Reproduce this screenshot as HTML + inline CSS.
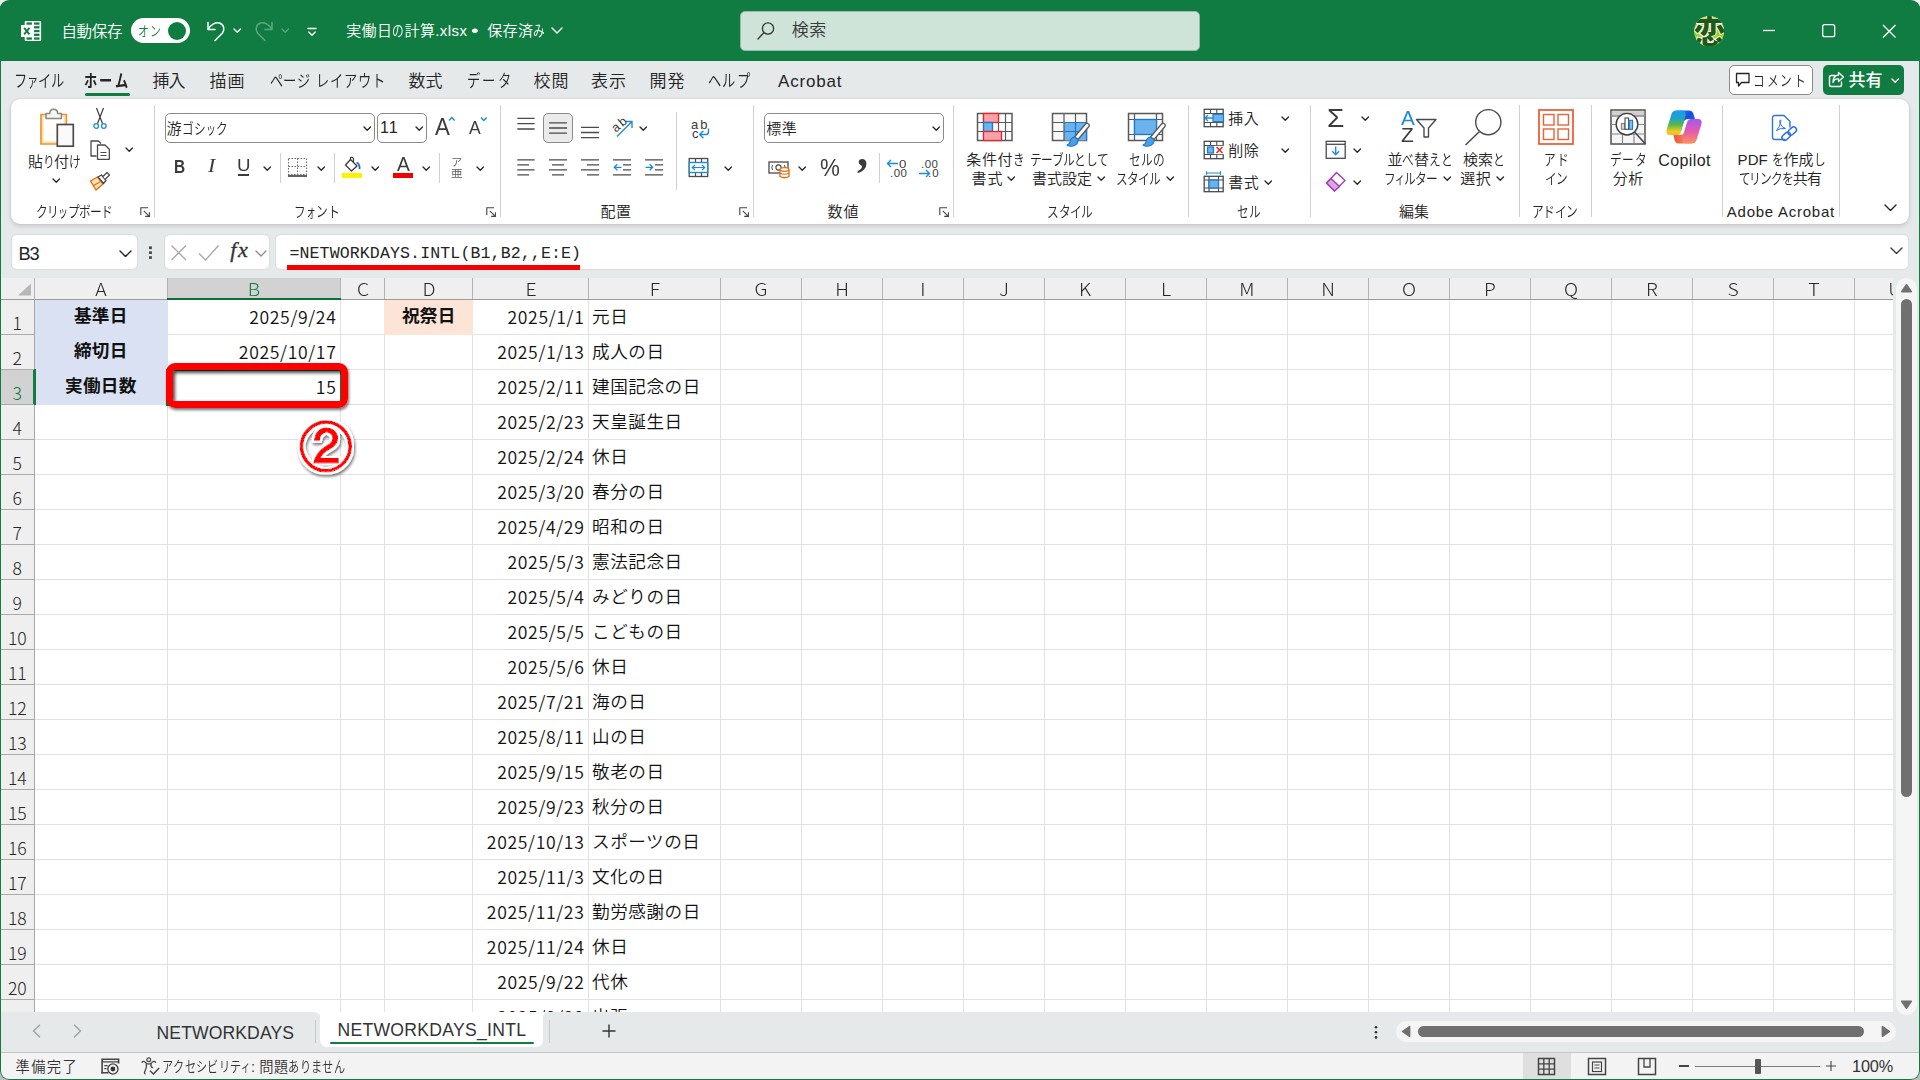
<!DOCTYPE html>
<html lang="ja"><head><meta charset="utf-8"><title>実働日の計算.xlsx - Excel</title>
<style>
html,body{margin:0;padding:0;background:linear-gradient(#EFEFEF 0 50%,#BDBDBD 50% 100%);}
body{width:1920px;height:1080px;position:relative;overflow:hidden;font-family:'Liberation Sans','Noto Sans CJK JP',sans-serif;}
#win{position:absolute;left:0;top:0;width:1920px;height:1080px;background:#E6E9EA;border-radius:9px;overflow:hidden;}
#frame{position:absolute;left:0;top:0;width:1918px;height:1078px;border:1px solid #107C41;border-right-width:1.5px;border-bottom-width:1.5px;border-radius:9px;border-top-color:transparent;z-index:50;box-sizing:content-box;width:1917.5px;height:1077.5px;pointer-events:none}
.b{position:absolute;box-sizing:border-box;}
.t{position:absolute;white-space:nowrap;}
.k,.ks{display:inline-block;font-style:normal;transform-origin:0 50%;}
.k{transform:scaleX(.78);width:calc(.78em + var(--ls));letter-spacing:0}
.ks{transform:scaleX(.66);width:calc(.66em + var(--ls));letter-spacing:0}
.sep{position:absolute;width:1px;background:#D1D1D1;}
</style></head>
<body><div id="win">
<div class="b" style="left:0px;top:0px;width:1920px;height:60.5px;background:#107C41"></div>
<svg class="b" style="left:20px;top:20px;" width="22" height="22" viewBox="0 0 22 22"><rect x="4.7" y="1" width="16.4" height="20.1" rx="1" fill="#fff"/><rect x="6.5" y="2.4" width="5.4" height="2.3" fill="#107C41"/><rect x="6.5" y="6.15" width="5.4" height="2.3" fill="#107C41"/><rect x="6.5" y="9.9" width="5.4" height="2.3" fill="#107C41"/><rect x="6.5" y="13.65" width="5.4" height="2.3" fill="#107C41"/><rect x="6.5" y="17.4" width="5.4" height="2.3" fill="#107C41"/><rect x="14.1" y="2.4" width="5.4" height="2.3" fill="#107C41"/><rect x="14.1" y="6.15" width="5.4" height="2.3" fill="#107C41"/><rect x="14.1" y="9.9" width="5.4" height="2.3" fill="#107C41"/><rect x="14.1" y="13.65" width="5.4" height="2.3" fill="#107C41"/><rect x="14.1" y="17.4" width="5.4" height="2.3" fill="#107C41"/><rect x="1" y="5" width="11.6" height="12" rx=".6" fill="#fff"/><path d="M4.2 7.8L9.4 14.4M9.4 7.8L4.2 14.4" stroke="#107C41" stroke-width="1.9" fill="none"/></svg>
<span id="t1" class="t " style="left:61.40px;top:20.60px;font-size:15.5px;line-height:22px;color:#fff;font-weight:350;font-family:'Liberation Sans','Noto Sans CJK JP',sans-serif;--ls:-0.333px;letter-spacing:-0.333px;">自動保存</span>
<div class="b" style="left:131px;top:18px;width:59px;height:25px;background:#fff;border-radius:13px"></div>
<span id="t2" class="t " style="left:138.00px;top:20.50px;font-size:14px;line-height:20px;color:#107C41;font-weight:350;font-family:'Liberation Sans','Noto Sans CJK JP',sans-serif;--ls:1.000px;letter-spacing:1.000px;"><i class="k">オ</i><i class="k">ン</i></span>
<div class="b" style="left:168px;top:21.5px;width:18px;height:18px;background:#107C41;border-radius:9px"></div>
<svg class="b" style="left:205px;top:19px;" width="22" height="24" viewBox="0 0 22 24"><path d="M3 3.5 V10.5 H10" fill="none" stroke="#fff" stroke-width="1.5" stroke-linecap="round" stroke-linejoin="round"/><path d="M3.5 10 C6 5.5 10.5 2.8 14.5 4 C19 5.5 20 10.5 17.5 14 L10 21.5" fill="none" stroke="#fff" stroke-width="1.5" stroke-linecap="round"/></svg>
<svg class="b" style="left:233.25px;top:27.9px;" width="8.5" height="5.2" viewBox="0 0 8.5 5.2"><path d="M1 1 L4.25 4.2 L7.5 1" fill="none" stroke="#fff" stroke-width="1.3" stroke-linecap="round" stroke-linejoin="round"/></svg>
<svg class="b" style="left:253px;top:19px;" width="22" height="24" viewBox="0 0 22 24"><path d="M19 3.5 V10.5 H12" fill="none" stroke="#5FA583" stroke-width="1.5" stroke-linecap="round" stroke-linejoin="round"/><path d="M18.5 10 C16 5.5 11.5 2.8 7.5 4 C3 5.5 2 10.5 4.5 14 L12 21.5" fill="none" stroke="#5FA583" stroke-width="1.5" stroke-linecap="round"/></svg>
<svg class="b" style="left:281.25px;top:27.9px;" width="8.5" height="5.2" viewBox="0 0 8.5 5.2"><path d="M1 1 L4.25 4.2 L7.5 1" fill="none" stroke="#5FA583" stroke-width="1.3" stroke-linecap="round" stroke-linejoin="round"/></svg>
<svg class="b" style="left:306px;top:26px;" width="12" height="12" viewBox="0 0 12 12"><path d="M2 2.5H10" stroke="#fff" stroke-width="1.3" stroke-linecap="round"/><path d="M2.8 6 L6 9.2 L9.2 6" fill="none" stroke="#fff" stroke-width="1.3" stroke-linecap="round" stroke-linejoin="round"/></svg>
<span id="t3" class="t " style="left:346.20px;top:20.30px;font-size:15px;line-height:21px;color:#fff;font-weight:350;font-family:'Liberation Sans','Noto Sans CJK JP',sans-serif;--ls:0.400px;letter-spacing:0.400px;">実働日<i class="k">の</i>計算.xlsx</span>
<span id="t4" class="t " style="left:471.00px;top:18.80px;font-size:17px;line-height:24px;color:#fff;font-weight:350;font-family:'Liberation Sans','Noto Sans CJK JP',sans-serif;--ls:0.000px;letter-spacing:0.000px;transform:scaleX(1.300);transform-origin:0 50%;">•</span>
<span id="t5" class="t " style="left:487.20px;top:20.30px;font-size:15px;line-height:21px;color:#fff;font-weight:350;font-family:'Liberation Sans','Noto Sans CJK JP',sans-serif;--ls:0.400px;letter-spacing:0.400px;">保存済<i class="k">み</i></span>
<svg class="b" style="left:551.0px;top:27.0px;" width="12" height="7" viewBox="0 0 12 7"><path d="M1 1 L6.0 6 L11 1" fill="none" stroke="#fff" stroke-width="1.4" stroke-linecap="round" stroke-linejoin="round"/></svg>
<div class="b" style="left:740px;top:11px;width:460px;height:40px;background:#CFE4D9;border:1px solid #9DB8AA;border-radius:5px"></div>
<svg class="b" style="left:756px;top:21px;" width="20" height="20" viewBox="0 0 20 20"><circle cx="12" cy="7.5" r="5.6" fill="none" stroke="#3A3A3A" stroke-width="1.4"/><path d="M8 11.5 L2 18" stroke="#3A3A3A" stroke-width="1.4" stroke-linecap="round"/></svg>
<span id="t6" class="t " style="left:791.70px;top:18.50px;font-size:17px;line-height:24px;color:#3A3A3A;font-weight:350;font-family:'Liberation Sans','Noto Sans CJK JP',sans-serif;--ls:0.600px;letter-spacing:0.600px;">検索</span>
<svg class="b" style="left:1693.8px;top:15.9px" width="30.4" height="30.4" viewBox="0 0 30.4 30.4"><clipPath id="avc"><circle cx="15.2" cy="15.2" r="15.2"/></clipPath><g clip-path="url(#avc)"><rect width="31" height="31" fill="#97D11F"/><text x="15.4" y="28.3" text-anchor="middle" font-family="'Liberation Sans','Noto Sans CJK JP',sans-serif" font-weight="900" font-size="33" fill="#1F5A14" stroke="#fff" stroke-width="1.8" stroke-linejoin="round" paint-order="stroke">恋</text></g></svg>
<svg class="b" style="left:1762px;top:24px;" width="14" height="14" viewBox="0 0 14 14"><path d="M1 6.5H13" stroke="#fff" stroke-width="1.3"/></svg>
<svg class="b" style="left:1821px;top:23px;" width="16" height="16" viewBox="0 0 16 16"><rect x="1.7" y="1.7" width="12" height="12" rx="2" fill="none" stroke="#fff" stroke-width="1.3"/></svg>
<svg class="b" style="left:1881px;top:23px;" width="16" height="16" viewBox="0 0 16 16"><path d="M2 2L14.5 14.5M14.5 2L2 14.5" stroke="#fff" stroke-width="1.3"/></svg>
<span id="t7" class="t " style="left:14.00px;top:70.10px;font-size:17px;line-height:24px;color:#242424;font-weight:350;font-family:'Liberation Sans','Noto Sans CJK JP',sans-serif;--ls:-0.333px;letter-spacing:-0.333px;"><i class="k">フ</i><i class="ks">ァ</i><i class="k">イ</i><i class="k">ル</i></span>
<span id="t8" class="t " style="left:84.00px;top:70.10px;font-size:17px;line-height:24px;color:#242424;font-weight:700;font-family:'Liberation Sans','Noto Sans CJK JP',sans-serif;--ls:2.000px;letter-spacing:2.000px;"><i class="k">ホ</i><i class="k">ー</i><i class="k">ム</i></span>
<span id="t9" class="t " style="left:152.50px;top:70.10px;font-size:17px;line-height:24px;color:#242424;font-weight:350;font-family:'Liberation Sans','Noto Sans CJK JP',sans-serif;--ls:-1.000px;letter-spacing:-1.000px;">挿入</span>
<span id="t10" class="t " style="left:209.50px;top:70.10px;font-size:17px;line-height:24px;color:#242424;font-weight:350;font-family:'Liberation Sans','Noto Sans CJK JP',sans-serif;--ls:1.000px;letter-spacing:1.000px;">描画</span>
<span id="t11" class="t " style="left:269.50px;top:70.10px;font-size:17px;line-height:24px;color:#242424;font-weight:350;font-family:'Liberation Sans','Noto Sans CJK JP',sans-serif;--ls:0.625px;letter-spacing:0.625px;"><i class="k">ペ</i><i class="k">ー</i><i class="k">ジ</i> <i class="k">レ</i><i class="k">イ</i><i class="k">ア</i><i class="k">ウ</i><i class="k">ト</i></span>
<span id="t12" class="t " style="left:408.50px;top:70.10px;font-size:17px;line-height:24px;color:#242424;font-weight:350;font-family:'Liberation Sans','Noto Sans CJK JP',sans-serif;--ls:0.000px;letter-spacing:0.000px;">数式</span>
<span id="t13" class="t " style="left:467.00px;top:70.10px;font-size:17px;line-height:24px;color:#242424;font-weight:350;font-family:'Liberation Sans','Noto Sans CJK JP',sans-serif;--ls:2.000px;letter-spacing:2.000px;"><i class="k">デ</i><i class="k">ー</i><i class="k">タ</i></span>
<span id="t14" class="t " style="left:533.50px;top:70.10px;font-size:17px;line-height:24px;color:#242424;font-weight:350;font-family:'Liberation Sans','Noto Sans CJK JP',sans-serif;--ls:1.000px;letter-spacing:1.000px;">校閲</span>
<span id="t15" class="t " style="left:591.00px;top:70.10px;font-size:17px;line-height:24px;color:#242424;font-weight:350;font-family:'Liberation Sans','Noto Sans CJK JP',sans-serif;--ls:1.000px;letter-spacing:1.000px;">表示</span>
<span id="t16" class="t " style="left:649.50px;top:70.10px;font-size:17px;line-height:24px;color:#242424;font-weight:350;font-family:'Liberation Sans','Noto Sans CJK JP',sans-serif;--ls:1.000px;letter-spacing:1.000px;">開発</span>
<span id="t17" class="t " style="left:707.50px;top:70.10px;font-size:17px;line-height:24px;color:#242424;font-weight:350;font-family:'Liberation Sans','Noto Sans CJK JP',sans-serif;--ls:1.500px;letter-spacing:1.500px;"><i class="k">ヘ</i><i class="k">ル</i><i class="k">プ</i></span>
<span id="t18" class="t " style="left:778.00px;top:70.10px;font-size:17px;line-height:24px;color:#242424;font-weight:350;font-family:'Liberation Sans','Noto Sans CJK JP',sans-serif;--ls:0.833px;letter-spacing:0.833px;">Acrobat</span>
<div class="b" style="left:85px;top:92.5px;width:45px;height:3.5px;background:#107C41;border-radius:2px"></div>
<div class="b" style="left:1729px;top:65px;width:84px;height:30px;background:#fff;border:1px solid #8A8A8A;border-radius:5px"></div>
<svg class="b" style="left:1735px;top:72px;" width="16" height="16" viewBox="0 0 16 16"><path d="M1.5 1.5H14V10.5H6.5L3.5 14V10.5H1.5Z" fill="none" stroke="#242424" stroke-width="1.3" stroke-linejoin="round"/></svg>
<span id="t19" class="t " style="left:1753.00px;top:70.00px;font-size:15px;line-height:21px;color:#242424;font-weight:350;font-family:'Liberation Sans','Noto Sans CJK JP',sans-serif;--ls:2.000px;letter-spacing:2.000px;"><i class="k">コ</i><i class="k">メ</i><i class="k">ン</i><i class="k">ト</i></span>
<div class="b" style="left:1823px;top:65px;width:81px;height:30px;background:#107C41;border-radius:5px"></div>
<svg class="b" style="left:1828px;top:71px;" width="18" height="18" viewBox="0 0 18 18"><path d="M7 4.5H3.2Q1.5 4.5 1.5 6.2V14Q1.5 15.5 3.2 15.5H11.8Q13.5 15.5 13.5 14V11" fill="none" stroke="#fff" stroke-width="1.4" stroke-linecap="round"/><path d="M10.5 1.5 L15.5 6 L10.5 10.5 V8 Q6.5 7.5 5 11.5 Q5 4.5 10.5 4Z" fill="none" stroke="#fff" stroke-width="1.3" stroke-linejoin="round"/></svg>
<span id="t20" class="t " style="left:1848.60px;top:69.00px;font-size:17px;line-height:24px;color:#fff;font-weight:500;font-family:'Liberation Sans','Noto Sans CJK JP',sans-serif;--ls:-0.200px;letter-spacing:-0.200px;">共有</span>
<svg class="b" style="left:1890.75px;top:78.4px;" width="8.5" height="5.2" viewBox="0 0 8.5 5.2"><path d="M1 1 L4.25 4.2 L7.5 1" fill="none" stroke="#fff" stroke-width="1.4" stroke-linecap="round" stroke-linejoin="round"/></svg>
<div class="b" style="left:11px;top:99px;width:1898px;height:125px;background:#fff;border-radius:9px;box-shadow:0 2px 5px rgba(0,0,0,.14),0 0 1.5px rgba(0,0,0,.12)"></div>
<svg class="b" style="left:39px;top:108px;" width="36" height="40" viewBox="0 0 36 40"><path d="M2 6.5H27.3V36H2Z" fill="#FFFDF8" stroke="#E8912D" stroke-width="1.7"/><path d="M3.7 8.2H25.6V34.3H3.7Z" fill="none" stroke="#FBDDA8" stroke-width="1.6"/>
<path d="M7 5.5H10.8C10.8 2.2 12.7 1.2 14.7 1.2S18.6 2.2 18.6 5.5H22.4V10.4H7Z" fill="#F5F5F5" stroke="#8A8886" stroke-width="1.5" stroke-linejoin="round"/>
<rect x="18.3" y="16.5" width="16" height="21.7" fill="#FAFAFA" stroke="#4A4A4A" stroke-width="1.7"/></svg>
<span id="t21" class="t " style="left:28.00px;top:150.50px;font-size:15px;line-height:21px;color:#242424;font-weight:350;font-family:'Liberation Sans','Noto Sans CJK JP',sans-serif;--ls:-0.333px;letter-spacing:-0.333px;">貼<i class="k">り</i>付<i class="k">け</i></span>
<svg class="b" style="left:51.95px;top:177.70000000000002px;" width="8.5" height="5.2" viewBox="0 0 8.5 5.2"><path d="M1 1 L4.25 4.2 L7.5 1" fill="none" stroke="#242424" stroke-width="1.3" stroke-linecap="round" stroke-linejoin="round"/></svg>
<svg class="b" style="left:92px;top:107px;" width="16" height="23" viewBox="0 0 16 23"><path d="M4.5 1 L10.5 16.5 M11.5 1 L5.5 16.5" stroke="#3B3B3B" stroke-width="1.2" fill="none"/>
<circle cx="4.2" cy="19" r="2.3" fill="none" stroke="#1E8BD8" stroke-width="1.3"/><circle cx="11.8" cy="19" r="2.3" fill="none" stroke="#1E8BD8" stroke-width="1.3"/></svg>
<svg class="b" style="left:89px;top:139px;" width="22" height="22" viewBox="0 0 22 22"><path d="M7.5 17H2V2H9.5L12 4.5" fill="none" stroke="#4A4A4A" stroke-width="1.3" stroke-linejoin="round"/>
<path d="M8.5 6H16L20.3 10.3V20.3H8.5Z" fill="#fff" stroke="#4A4A4A" stroke-width="1.3" stroke-linejoin="round"/>
<path d="M11.5 13.5H17.5M11.5 16.5H17.5" stroke="#4A4A4A" stroke-width="1.1"/></svg>
<svg class="b" style="left:125.44999999999999px;top:147.4px;" width="8.5" height="5.2" viewBox="0 0 8.5 5.2"><path d="M1 1 L4.25 4.2 L7.5 1" fill="none" stroke="#242424" stroke-width="1.3" stroke-linecap="round" stroke-linejoin="round"/></svg>
<svg class="b" style="left:89px;top:171px;" width="22" height="21" viewBox="0 0 22 21"><path d="M1.5 10 L8.5 6 L14 13 L7 19Z" fill="#FCE2B8" stroke="#E36C0A" stroke-width="1.4" stroke-linejoin="round"/>
<path d="M4.5 14.5 L11 11" stroke="#E36C0A" stroke-width="1.2"/>
<path d="M9 6 L12.5 4 L17 9.5 L14.5 12.5Z" fill="#fff" stroke="#4A4A4A" stroke-width="1.3" stroke-linejoin="round"/>
<path d="M14 5.5 L18 1.5 L20.5 4 L16.5 8" fill="#fff" stroke="#4A4A4A" stroke-width="1.3" stroke-linejoin="round"/></svg>
<span id="t22" class="t " style="left:36.00px;top:201.00px;font-size:15px;line-height:21px;color:#242424;font-weight:350;font-family:'Liberation Sans','Noto Sans CJK JP',sans-serif;--ls:-0.500px;letter-spacing:-0.500px;"><i class="k">ク</i><i class="k">リ</i><i class="ks">ッ</i><i class="k">プ</i><i class="k">ボ</i><i class="k">ー</i><i class="k">ド</i></span>
<svg class="b" style="left:140px;top:207px;" width="10" height="10" viewBox="0 0 10 10"><path d="M0.8 8V0.8H8" fill="none" stroke="#444" stroke-width="1.1"/><path d="M3.8 3.8L9.3 9.3M9.4 5.2V9.4H5.2" fill="none" stroke="#444" stroke-width="1.1"/></svg>
<div class="sep" style="left:154px;top:105px;height:112px"></div>
<div class="b" style="left:165px;top:113px;width:210px;height:30px;border:1px solid #8A8A8A;border-radius:5px;background:#fff"></div>
<span id="t23" class="t " style="left:166.50px;top:117.50px;font-size:15px;line-height:21px;color:#242424;font-weight:350;font-family:'Liberation Sans','Noto Sans CJK JP',sans-serif;--ls:0.250px;letter-spacing:0.250px;">游<i class="k">ゴ</i><i class="k">シ</i><i class="ks">ッ</i><i class="k">ク</i></span>
<svg class="b" style="left:363.15px;top:125.70000000000002px;" width="8.5" height="5.2" viewBox="0 0 8.5 5.2"><path d="M1 1 L4.25 4.2 L7.5 1" fill="none" stroke="#242424" stroke-width="1.3" stroke-linecap="round" stroke-linejoin="round"/></svg>
<div class="b" style="left:377px;top:113px;width:50px;height:30px;border:1px solid #8A8A8A;border-radius:5px;background:#fff"></div>
<span id="t24" class="t " style="left:380.00px;top:117.00px;font-size:16px;line-height:22px;color:#242424;font-weight:350;font-family:'Liberation Sans','Noto Sans CJK JP',sans-serif;--ls:1.000px;letter-spacing:1.000px;">11</span>
<svg class="b" style="left:414.75px;top:125.70000000000002px;" width="8.5" height="5.2" viewBox="0 0 8.5 5.2"><path d="M1 1 L4.25 4.2 L7.5 1" fill="none" stroke="#242424" stroke-width="1.3" stroke-linecap="round" stroke-linejoin="round"/></svg>
<span id="t25" class="t " style="left:435.00px;top:110.80px;font-size:23px;line-height:32px;color:#3B3B3B;font-weight:350;font-family:'Liberation Sans','Noto Sans CJK JP',sans-serif;--ls:0.000px;letter-spacing:0.000px;transform:scaleX(0.967);transform-origin:0 50%;">A</span>
<svg class="b" style="left:448px;top:116px;" width="8" height="6" viewBox="0 0 8 6"><path d="M1 4.5L3.8 1.5L6.6 4.5" fill="none" stroke="#1E8BD8" stroke-width="1.4"/></svg>
<span id="t26" class="t " style="left:469.00px;top:114.00px;font-size:19px;line-height:27px;color:#3B3B3B;font-weight:350;font-family:'Liberation Sans','Noto Sans CJK JP',sans-serif;--ls:0.000px;letter-spacing:0.000px;transform:scaleX(0.923);transform-origin:0 50%;">A</span>
<svg class="b" style="left:480px;top:116px;" width="8" height="6" viewBox="0 0 8 6"><path d="M1 1.5L3.8 4.5L6.6 1.5" fill="none" stroke="#1E8BD8" stroke-width="1.4"/></svg>
<span id="t27" class="t " style="left:174.42px;top:154.80px;font-size:17.5px;line-height:24px;color:#3B3B3B;font-weight:700;font-family:'Liberation Sans','Noto Sans CJK JP',sans-serif;--ls:0.000px;letter-spacing:0.000px;transform:scaleX(0.882);transform-origin:0 50%;">B</span>
<span id="t28" class="t " style="left:207.50px;top:154.30px;font-size:18px;line-height:25px;color:#3B3B3B;font-weight:400;font-family:'Liberation Serif',serif;--ls:0.000px;letter-spacing:0.000px;font-style:italic;transform:scaleX(1.214);transform-origin:0 50%;">I</span>
<span id="t29" class="t " style="left:236.90px;top:154.00px;font-size:17px;line-height:24px;color:#3B3B3B;font-weight:350;font-family:'Liberation Sans','Noto Sans CJK JP',sans-serif;--ls:0.000px;letter-spacing:0.000px;transform:scaleX(1.100);transform-origin:0 50%;">U</span>
<div class="b" style="left:238px;top:174.3px;width:11px;height:1.3px;background:#3B3B3B"></div>
<svg class="b" style="left:262.75px;top:165.8px;" width="8.5" height="5.2" viewBox="0 0 8.5 5.2"><path d="M1 1 L4.25 4.2 L7.5 1" fill="none" stroke="#242424" stroke-width="1.3" stroke-linecap="round" stroke-linejoin="round"/></svg>
<div class="sep" style="left:280px;top:153px;height:30px"></div>
<svg class="b" style="left:287px;top:157px;" width="21" height="21" viewBox="0 0 21 21"><path d="M1.5 1.5H19.5V17.5H1.5Z M10.5 1.5V17.5 M1.5 9.5H19.5" fill="none" stroke="#6B6B6B" stroke-width="1.1" stroke-dasharray="1.6 1.4"/>
<path d="M1 19H20" stroke="#3B3B3B" stroke-width="1.6"/></svg>
<svg class="b" style="left:316.75px;top:165.8px;" width="8.5" height="5.2" viewBox="0 0 8.5 5.2"><path d="M1 1 L4.25 4.2 L7.5 1" fill="none" stroke="#242424" stroke-width="1.3" stroke-linecap="round" stroke-linejoin="round"/></svg>
<div class="sep" style="left:334px;top:153px;height:30px"></div>
<svg class="b" style="left:343px;top:156px;" width="20" height="17" viewBox="0 0 20 17"><path d="M7.5 3.5 L14 10 L8.5 15 L2.5 9 Z" fill="#fff" stroke="#3B3B3B" stroke-width="1.3" stroke-linejoin="round"/>
<path d="M7.5 3.5 V1.5 Q9.5 0.8 10.5 2.5 V6" fill="none" stroke="#3B3B3B" stroke-width="1.2"/>
<path d="M13.5 6.5 Q17 8 16.5 13" fill="none" stroke="#1E6FC0" stroke-width="1.8"/></svg>
<div class="b" style="left:342px;top:173px;width:20px;height:5px;background:#FFF100"></div>
<svg class="b" style="left:370.75px;top:165.8px;" width="8.5" height="5.2" viewBox="0 0 8.5 5.2"><path d="M1 1 L4.25 4.2 L7.5 1" fill="none" stroke="#242424" stroke-width="1.3" stroke-linecap="round" stroke-linejoin="round"/></svg>
<span id="t30" class="t " style="left:396.50px;top:150.00px;font-size:20px;line-height:28px;color:#3B3B3B;font-weight:350;font-family:'Liberation Sans','Noto Sans CJK JP',sans-serif;--ls:0.000px;letter-spacing:0.000px;transform:scaleX(0.962);transform-origin:0 50%;">A</span>
<div class="b" style="left:393px;top:173px;width:20px;height:5px;background:#F40000"></div>
<svg class="b" style="left:421.75px;top:165.8px;" width="8.5" height="5.2" viewBox="0 0 8.5 5.2"><path d="M1 1 L4.25 4.2 L7.5 1" fill="none" stroke="#242424" stroke-width="1.3" stroke-linecap="round" stroke-linejoin="round"/></svg>
<div class="sep" style="left:439px;top:153px;height:30px"></div>
<span id="t31" class="t " style="left:451.38px;top:155.50px;font-size:10px;line-height:14px;color:#5A5A5A;font-weight:350;font-family:'Liberation Sans','Noto Sans CJK JP',sans-serif;--ls:0.000px;letter-spacing:0.000px;transform:scaleX(1.125);transform-origin:0 50%;">ア</span>
<span id="t32" class="t " style="left:450.89px;top:165.50px;font-size:10.5px;line-height:15px;color:#5A5A5A;font-weight:350;font-family:'Liberation Sans','Noto Sans CJK JP',sans-serif;--ls:0.000px;letter-spacing:0.000px;transform:scaleX(1.111);transform-origin:0 50%;">亜</span>
<svg class="b" style="left:475.75px;top:165.8px;" width="8.5" height="5.2" viewBox="0 0 8.5 5.2"><path d="M1 1 L4.25 4.2 L7.5 1" fill="none" stroke="#242424" stroke-width="1.3" stroke-linecap="round" stroke-linejoin="round"/></svg>
<span id="t33" class="t " style="left:294.00px;top:201.00px;font-size:15px;line-height:21px;color:#242424;font-weight:350;font-family:'Liberation Sans','Noto Sans CJK JP',sans-serif;--ls:0.333px;letter-spacing:0.333px;"><i class="k">フ</i><i class="ks">ォ</i><i class="k">ン</i><i class="k">ト</i></span>
<svg class="b" style="left:486px;top:207px;" width="10" height="10" viewBox="0 0 10 10"><path d="M0.8 8V0.8H8" fill="none" stroke="#444" stroke-width="1.1"/><path d="M3.8 3.8L9.3 9.3M9.4 5.2V9.4H5.2" fill="none" stroke="#444" stroke-width="1.1"/></svg>
<div class="sep" style="left:500px;top:105px;height:112px"></div>
<svg class="b" style="left:517px;top:0px" width="20" height="230" viewBox="0 0 20 230"><path d="M0.3 118.4H17.6M0.3 123.7H17.6M0.3 129H17.6" stroke="#4A4A4A" stroke-width="1.3" fill="none"/></svg>
<div class="b" style="left:543px;top:113px;width:30px;height:30px;border:1px solid #8A8A8A;border-radius:5px;background:#EBEBEB"></div>
<svg class="b" style="left:549px;top:0px" width="20" height="230" viewBox="0 0 20 230"><path d="M0 122.8H18M0 128H18M0 133.2H18" stroke="#4A4A4A" stroke-width="1.3" fill="none"/></svg>
<svg class="b" style="left:581px;top:0px" width="20" height="230" viewBox="0 0 20 230"><path d="M0 127.3H18M0 132.5H18M0 137.7H18" stroke="#4A4A4A" stroke-width="1.3" fill="none"/></svg>
<svg class="b" style="left:610px;top:116px;" width="25" height="22" viewBox="0 0 25 22"><path d="M7 20.5 L21.5 6 M15.5 5.5 H22 V12" fill="none" stroke="#1E8BD8" stroke-width="1.4"/></svg>
<span id="t34" class="t " style="left:611.00px;top:115.00px;font-size:12.5px;line-height:18px;color:#3B3B3B;font-weight:350;font-family:'Liberation Sans','Noto Sans CJK JP',sans-serif;--ls:2.000px;letter-spacing:2.000px;transform:rotate(-40deg);transform-origin:50% 50%;">ab</span>
<svg class="b" style="left:638.75px;top:125.70000000000002px;" width="8.5" height="5.2" viewBox="0 0 8.5 5.2"><path d="M1 1 L4.25 4.2 L7.5 1" fill="none" stroke="#242424" stroke-width="1.3" stroke-linecap="round" stroke-linejoin="round"/></svg>
<div class="sep" style="left:676px;top:112px;height:78px"></div>
<span id="t35" class="t " style="left:691.00px;top:116.00px;font-size:13px;line-height:18px;color:#3B3B3B;font-weight:350;font-family:'Liberation Sans','Noto Sans CJK JP',sans-serif;--ls:2.000px;letter-spacing:2.000px;">ab</span>
<span id="t36" class="t " style="left:692.00px;top:125.00px;font-size:13px;line-height:18px;color:#3B3B3B;font-weight:350;font-family:'Liberation Sans','Noto Sans CJK JP',sans-serif;--ls:0.000px;letter-spacing:0.000px;">c</span>
<svg class="b" style="left:698px;top:128px;" width="12" height="11" viewBox="0 0 12 11"><path d="M10.5 1 V4 Q10.5 6.5 8 6.5 H2 M5 3.2 L1.6 6.5 L5 9.8" fill="none" stroke="#1E8BD8" stroke-width="1.4" stroke-linejoin="round" stroke-linecap="round"/></svg>
<svg class="b" style="left:517px;top:0px" width="20" height="230" viewBox="0 0 20 230"><path d="M0.3 159.8H17.6M0.3 164.8H12M0.3 169.8H17.6M0.3 174.8H12" stroke="#4A4A4A" stroke-width="1.3" fill="none"/></svg>
<svg class="b" style="left:549px;top:0px" width="20" height="230" viewBox="0 0 20 230"><path d="M0 159.8H18M3 164.8H15M0 169.8H18M3 174.8H15" stroke="#4A4A4A" stroke-width="1.3" fill="none"/></svg>
<svg class="b" style="left:581px;top:0px" width="20" height="230" viewBox="0 0 20 230"><path d="M0 159.8H18M6 164.8H18M0 169.8H18M6 174.8H18" stroke="#4A4A4A" stroke-width="1.3" fill="none"/></svg>
<svg class="b" style="left:613px;top:0px" width="20" height="230" viewBox="0 0 20 230"><path d="M0 159.8H18M10 164.8H18M10 169.8H18M0 174.8H18" stroke="#4A4A4A" stroke-width="1.3" fill="none"/></svg>
<svg class="b" style="left:613px;top:162px;" width="9" height="10" viewBox="0 0 9 10"><path d="M8.5 5.3H1.5M4.3 2.3L1.3 5.3L4.3 8.3" fill="none" stroke="#1E8BD8" stroke-width="1.3"/></svg>
<svg class="b" style="left:645px;top:0px" width="20" height="230" viewBox="0 0 20 230"><path d="M0 159.8H18M10 164.8H18M10 169.8H18M0 174.8H18" stroke="#4A4A4A" stroke-width="1.3" fill="none"/></svg>
<svg class="b" style="left:644.5px;top:162px;" width="9" height="10" viewBox="0 0 9 10"><path d="M0.5 5.3H7.5M4.7 2.3L7.7 5.3L4.7 8.3" fill="none" stroke="#1E8BD8" stroke-width="1.3"/></svg>
<svg class="b" style="left:688px;top:157px;" width="21" height="21" viewBox="0 0 21 21"><rect x="1.2" y="1.5" width="18.5" height="18" fill="#fff" stroke="#4A4A4A" stroke-width="1.3"/>
<path d="M7.5 1.5V5.5M13.5 1.5V5.5M7.5 15.5V19.5M13.5 15.5V19.5" stroke="#4A4A4A" stroke-width="1.2"/>
<rect x="1.2" y="5.5" width="18.5" height="10" fill="#fff" stroke="#1E8BD8" stroke-width="1.4"/>
<path d="M4.5 10.5H16.5M7 8L4.3 10.5L7 13M14 8L16.7 10.5L14 13" fill="none" stroke="#1E8BD8" stroke-width="1.2"/></svg>
<svg class="b" style="left:723.95px;top:165.8px;" width="8.5" height="5.2" viewBox="0 0 8.5 5.2"><path d="M1 1 L4.25 4.2 L7.5 1" fill="none" stroke="#242424" stroke-width="1.3" stroke-linecap="round" stroke-linejoin="round"/></svg>
<span id="t37" class="t " style="left:600.50px;top:201.00px;font-size:15px;line-height:21px;color:#242424;font-weight:350;font-family:'Liberation Sans','Noto Sans CJK JP',sans-serif;--ls:0.600px;letter-spacing:0.600px;">配置</span>
<svg class="b" style="left:739px;top:207px;" width="10" height="10" viewBox="0 0 10 10"><path d="M0.8 8V0.8H8" fill="none" stroke="#444" stroke-width="1.1"/><path d="M3.8 3.8L9.3 9.3M9.4 5.2V9.4H5.2" fill="none" stroke="#444" stroke-width="1.1"/></svg>
<div class="sep" style="left:753px;top:105px;height:112px"></div>
<div class="b" style="left:764px;top:113px;width:180px;height:30px;border:1px solid #8A8A8A;border-radius:5px;background:#fff"></div>
<span id="t38" class="t " style="left:766.30px;top:117.50px;font-size:15px;line-height:21px;color:#242424;font-weight:350;font-family:'Liberation Sans','Noto Sans CJK JP',sans-serif;--ls:0.400px;letter-spacing:0.400px;">標準</span>
<svg class="b" style="left:931.75px;top:125.70000000000002px;" width="8.5" height="5.2" viewBox="0 0 8.5 5.2"><path d="M1 1 L4.25 4.2 L7.5 1" fill="none" stroke="#242424" stroke-width="1.3" stroke-linecap="round" stroke-linejoin="round"/></svg>
<svg class="b" style="left:768px;top:160px;" width="23" height="19" viewBox="0 0 23 19"><rect x="1" y="2" width="19" height="11" fill="#fff" stroke="#4A4A4A" stroke-width="1.3"/>
<circle cx="10.5" cy="7.5" r="2.6" fill="none" stroke="#4A4A4A" stroke-width="1.1"/><path d="M4.5 5Q3.3 7.5 4.5 10M16.5 5Q17.7 7.5 16.5 10" fill="none" stroke="#4A4A4A" stroke-width="1"/>
<path d="M12 9.5V16.5Q16.5 19 21 16.5V9.5" fill="#fff" stroke="#E36C0A" stroke-width="1.3"/>
<ellipse cx="16.5" cy="9.5" rx="4.5" ry="1.8" fill="#fff" stroke="#E36C0A" stroke-width="1.3"/><path d="M12 13Q16.5 15.5 21 13" fill="none" stroke="#E36C0A" stroke-width="1.2"/></svg>
<svg class="b" style="left:798.25px;top:165.8px;" width="8.5" height="5.2" viewBox="0 0 8.5 5.2"><path d="M1 1 L4.25 4.2 L7.5 1" fill="none" stroke="#242424" stroke-width="1.3" stroke-linecap="round" stroke-linejoin="round"/></svg>
<span id="t39" class="t " style="left:819.77px;top:150.50px;font-size:24px;line-height:34px;color:#3B3B3B;font-weight:350;font-family:'Liberation Sans','Noto Sans CJK JP',sans-serif;--ls:0.000px;letter-spacing:0.000px;transform:scaleX(0.930);transform-origin:0 50%;">%</span>
<span id="t40" class="t " style="left:857.03px;top:118.50px;font-size:46px;line-height:64px;color:#3B3B3B;font-weight:700;font-family:'Liberation Serif',serif;--ls:0.000px;letter-spacing:0.000px;transform:scaleX(0.967);transform-origin:0 50%;">,</span>
<div class="sep" style="left:879px;top:153px;height:30px"></div>
<span id="t41" class="t " style="left:899.00px;top:155.50px;font-size:11.5px;line-height:16px;color:#3B3B3B;font-weight:350;font-family:'Liberation Sans','Noto Sans CJK JP',sans-serif;--ls:0.000px;letter-spacing:0.000px;transform:scaleX(1.167);transform-origin:0 50%;">0</span>
<span id="t42" class="t " style="left:890.00px;top:165.00px;font-size:11.5px;line-height:16px;color:#3B3B3B;font-weight:350;font-family:'Liberation Sans','Noto Sans CJK JP',sans-serif;--ls:0.500px;letter-spacing:0.500px;">.00</span>
<svg class="b" style="left:886px;top:159px;" width="13" height="9" viewBox="0 0 13 9"><path d="M12 4.5H1.5M5 1L1.5 4.5L5 8" fill="none" stroke="#1E8BD8" stroke-width="1.4"/></svg>
<span id="t43" class="t " style="left:921.00px;top:155.50px;font-size:11.5px;line-height:16px;color:#3B3B3B;font-weight:350;font-family:'Liberation Sans','Noto Sans CJK JP',sans-serif;--ls:0.500px;letter-spacing:0.500px;">.00</span>
<span id="t44" class="t " style="left:928.00px;top:165.00px;font-size:11.5px;line-height:16px;color:#3B3B3B;font-weight:350;font-family:'Liberation Sans','Noto Sans CJK JP',sans-serif;--ls:1.000px;letter-spacing:1.000px;">.0</span>
<svg class="b" style="left:918px;top:168.5px;" width="13" height="9" viewBox="0 0 13 9"><path d="M1 4.5H11.5M8 1L11.5 4.5L8 8" fill="none" stroke="#1E8BD8" stroke-width="1.4"/></svg>
<span id="t45" class="t " style="left:827.40px;top:201.00px;font-size:15px;line-height:21px;color:#242424;font-weight:350;font-family:'Liberation Sans','Noto Sans CJK JP',sans-serif;--ls:1.200px;letter-spacing:1.200px;">数値</span>
<svg class="b" style="left:939px;top:207px;" width="10" height="10" viewBox="0 0 10 10"><path d="M0.8 8V0.8H8" fill="none" stroke="#444" stroke-width="1.1"/><path d="M3.8 3.8L9.3 9.3M9.4 5.2V9.4H5.2" fill="none" stroke="#444" stroke-width="1.1"/></svg>
<div class="sep" style="left:953px;top:105px;height:112px"></div>
<svg class="b" style="left:976px;top:112px;" width="38" height="30" viewBox="0 0 38 30"><rect x="1.5" y="1.5" width="34.5" height="27" fill="#fff" stroke="#5A5A5A" stroke-width="1.5"/>
<path d="M7.5 1.5V28.5M22.5 1.5V28.5M29.5 1.5V28.5M1.5 10.5H36M1.5 19.5H36" stroke="#5A5A5A" stroke-width="1.2" fill="none"/>
<rect x="7.5" y="1.5" width="15" height="9" fill="#F9A1A8" stroke="#E0262E" stroke-width="1.3"/>
<rect x="7.5" y="10.5" width="9" height="9" fill="#6CB2EC" stroke="#1E78C8" stroke-width="1.3"/>
<rect x="7.5" y="19.5" width="18" height="9" fill="#F9A1A8" stroke="#E0262E" stroke-width="1.3"/></svg>
<span id="t46" class="t " style="left:966.30px;top:148.70px;font-size:15px;line-height:21px;color:#242424;font-weight:350;font-family:'Liberation Sans','Noto Sans CJK JP',sans-serif;--ls:0.600px;letter-spacing:0.600px;">条件付<i class="k">き</i></span>
<span id="t47" class="t " style="left:971.60px;top:167.90px;font-size:15px;line-height:21px;color:#242424;font-weight:350;font-family:'Liberation Sans','Noto Sans CJK JP',sans-serif;--ls:0.800px;letter-spacing:0.800px;">書式</span>
<svg class="b" style="left:1006.75px;top:176.0px;" width="8.5" height="5.2" viewBox="0 0 8.5 5.2"><path d="M1 1 L4.25 4.2 L7.5 1" fill="none" stroke="#242424" stroke-width="1.3" stroke-linecap="round" stroke-linejoin="round"/></svg>
<svg class="b" style="left:1051px;top:112px;" width="42" height="37" viewBox="0 0 42 37"><rect x="1.5" y="1.5" width="34" height="27" fill="#FAFAFA" stroke="#5A5A5A" stroke-width="1.5"/>
<rect x="13" y="10.5" width="22.5" height="18" fill="#6CB2EC"/>
<path d="M13 1.5V28.5M24.5 1.5V10.5M1.5 10.5H13M1.5 19.5H13" stroke="#5A5A5A" stroke-width="1.2" fill="none"/>
<path d="M13 10.5H35.5M13 19.5H35.5M24.5 10.5V28.5M35.5 10.5V28.5" stroke="#1E78C8" stroke-width="1.2" fill="none"/><g transform="translate(15.5,10.5)"><path d="M21.5 1 Q23.5 2 22.5 4 L11.5 17 L8 14.5 L19 1.5 Q20.3 0.3 21.5 1Z" fill="#fff" stroke="#5A5A5A" stroke-width="1.3" stroke-linejoin="round"/>
<path d="M8 14.5 L11.5 17 Q12 22 6.5 23.5 Q3 24.3 0.5 22.5 Q3.5 21.5 3.8 18.5 Q4.3 15 8 14.5Z" fill="#4C9EE6" stroke="#1E78C8" stroke-width="1.1" stroke-linejoin="round"/></g></svg>
<span id="t48" class="t " style="left:1029.60px;top:148.70px;font-size:15px;line-height:21px;color:#242424;font-weight:350;font-family:'Liberation Sans','Noto Sans CJK JP',sans-serif;--ls:-0.467px;letter-spacing:-0.467px;"><i class="k">テ</i><i class="k">ー</i><i class="k">ブ</i><i class="k">ル</i><i class="k">と</i><i class="k">し</i><i class="k">て</i></span>
<span id="t49" class="t " style="left:1032.00px;top:167.90px;font-size:15px;line-height:21px;color:#242424;font-weight:350;font-family:'Liberation Sans','Noto Sans CJK JP',sans-serif;--ls:0.000px;letter-spacing:0.000px;">書式設定</span>
<svg class="b" style="left:1096.75px;top:176.0px;" width="8.5" height="5.2" viewBox="0 0 8.5 5.2"><path d="M1 1 L4.25 4.2 L7.5 1" fill="none" stroke="#242424" stroke-width="1.3" stroke-linecap="round" stroke-linejoin="round"/></svg>
<svg class="b" style="left:1127px;top:112px;" width="42" height="37" viewBox="0 0 42 37"><rect x="1.5" y="1.5" width="34" height="27" fill="#FAFAFA" stroke="#5A5A5A" stroke-width="1.5"/>
<path d="M7.5 1.5V28.5M29.5 1.5V28.5M1.5 7.5H35.5M1.5 22.5H35.5" stroke="#5A5A5A" stroke-width="1.2" fill="none"/>
<rect x="7.5" y="7.5" width="22" height="15" fill="#6CB2EC" stroke="#1E78C8" stroke-width="1.3"/><g transform="translate(15.5,10.5)"><path d="M21.5 1 Q23.5 2 22.5 4 L11.5 17 L8 14.5 L19 1.5 Q20.3 0.3 21.5 1Z" fill="#fff" stroke="#5A5A5A" stroke-width="1.3" stroke-linejoin="round"/>
<path d="M8 14.5 L11.5 17 Q12 22 6.5 23.5 Q3 24.3 0.5 22.5 Q3.5 21.5 3.8 18.5 Q4.3 15 8 14.5Z" fill="#4C9EE6" stroke="#1E78C8" stroke-width="1.1" stroke-linejoin="round"/></g></svg>
<span id="t50" class="t " style="left:1128.50px;top:148.70px;font-size:15px;line-height:21px;color:#242424;font-weight:350;font-family:'Liberation Sans','Noto Sans CJK JP',sans-serif;--ls:0.300px;letter-spacing:0.300px;"><i class="k">セ</i><i class="k">ル</i><i class="k">の</i></span>
<span id="t51" class="t " style="left:1115.80px;top:167.90px;font-size:15px;line-height:21px;color:#242424;font-weight:350;font-family:'Liberation Sans','Noto Sans CJK JP',sans-serif;--ls:-0.533px;letter-spacing:-0.533px;"><i class="k">ス</i><i class="k">タ</i><i class="k">イ</i><i class="k">ル</i></span>
<svg class="b" style="left:1166.25px;top:176.0px;" width="8.5" height="5.2" viewBox="0 0 8.5 5.2"><path d="M1 1 L4.25 4.2 L7.5 1" fill="none" stroke="#242424" stroke-width="1.3" stroke-linecap="round" stroke-linejoin="round"/></svg>
<span id="t52" class="t " style="left:1047.40px;top:201.00px;font-size:15px;line-height:21px;color:#242424;font-weight:350;font-family:'Liberation Sans','Noto Sans CJK JP',sans-serif;--ls:-0.400px;letter-spacing:-0.400px;"><i class="k">ス</i><i class="k">タ</i><i class="k">イ</i><i class="k">ル</i></span>
<div class="sep" style="left:1188px;top:105px;height:112px"></div>
<svg class="b" style="left:1203px;top:108px;" width="22" height="20" viewBox="0 0 22 20"><rect x="1.2" y="1.3" width="19" height="17.4" fill="#fff" stroke="#4A4A4A" stroke-width="1.3"/>
<path d="M1.2 5.5H20.2M1.2 14.5H20.2M7.5 1.3V5.5M13.8 1.3V5.5M7.5 14.5V18.7M13.8 14.5V18.7" stroke="#4A4A4A" stroke-width="1.1"/>
<rect x="10" y="6.3" width="10.5" height="7.4" fill="#6CB2EC" stroke="#1E78C8" stroke-width="1.2"/>
<path d="M10 10H2M5 7L2 10L5 13" fill="none" stroke="#1E8BD8" stroke-width="1.4"/></svg>
<span id="t53" class="t " style="left:1228.30px;top:107.70px;font-size:15px;line-height:21px;color:#242424;font-weight:350;font-family:'Liberation Sans','Noto Sans CJK JP',sans-serif;--ls:0.400px;letter-spacing:0.400px;">挿入</span>
<svg class="b" style="left:1280.75px;top:115.80000000000001px;" width="8.5" height="5.2" viewBox="0 0 8.5 5.2"><path d="M1 1 L4.25 4.2 L7.5 1" fill="none" stroke="#242424" stroke-width="1.3" stroke-linecap="round" stroke-linejoin="round"/></svg>
<svg class="b" style="left:1203px;top:140px;" width="22" height="20" viewBox="0 0 22 20"><rect x="1.2" y="1.3" width="19" height="17.4" fill="#fff" stroke="#4A4A4A" stroke-width="1.3"/>
<path d="M1.2 5.5H20.2M1.2 14.5H20.2M7.5 1.3V5.5M13.8 1.3V5.5M7.5 14.5V18.7M13.8 14.5V18.7" stroke="#4A4A4A" stroke-width="1.1"/>
<rect x="11.5" y="5.8" width="9.5" height="8.4" fill="#fff" stroke="none"/>
<rect x="4.5" y="7" width="6" height="6" fill="#6CB2EC" stroke="#1E78C8" stroke-width="1.2"/>
<path d="M13.5 7L19.5 13M19.5 7L13.5 13" stroke="#E8262E" stroke-width="1.5"/></svg>
<span id="t54" class="t " style="left:1228.30px;top:139.50px;font-size:15px;line-height:21px;color:#242424;font-weight:350;font-family:'Liberation Sans','Noto Sans CJK JP',sans-serif;--ls:0.400px;letter-spacing:0.400px;">削除</span>
<svg class="b" style="left:1280.75px;top:147.6px;" width="8.5" height="5.2" viewBox="0 0 8.5 5.2"><path d="M1 1 L4.25 4.2 L7.5 1" fill="none" stroke="#242424" stroke-width="1.3" stroke-linecap="round" stroke-linejoin="round"/></svg>
<svg class="b" style="left:1203px;top:171px;" width="22" height="22" viewBox="0 0 22 22"><path d="M3.5 2H17.5M3.5 0.3V3.7M17.5 0.3V3.7" stroke="#1E8BD8" stroke-width="1.2" fill="none"/>
<rect x="1.2" y="5.3" width="19" height="15.4" fill="#fff" stroke="#4A4A4A" stroke-width="1.3"/>
<path d="M1.2 9H20.2M1.2 17H20.2M6 5.3V20.7M15.5 5.3V20.7" stroke="#4A4A4A" stroke-width="1.1"/>
<rect x="6" y="9" width="9.5" height="8" fill="#6CB2EC" stroke="#1E78C8" stroke-width="1.2"/></svg>
<span id="t55" class="t " style="left:1228.30px;top:171.50px;font-size:15px;line-height:21px;color:#242424;font-weight:350;font-family:'Liberation Sans','Noto Sans CJK JP',sans-serif;--ls:0.400px;letter-spacing:0.400px;">書式</span>
<svg class="b" style="left:1263.75px;top:179.6px;" width="8.5" height="5.2" viewBox="0 0 8.5 5.2"><path d="M1 1 L4.25 4.2 L7.5 1" fill="none" stroke="#242424" stroke-width="1.3" stroke-linecap="round" stroke-linejoin="round"/></svg>
<span id="t56" class="t " style="left:1237.00px;top:201.00px;font-size:15px;line-height:21px;color:#242424;font-weight:350;font-family:'Liberation Sans','Noto Sans CJK JP',sans-serif;--ls:0.600px;letter-spacing:0.600px;"><i class="k">セ</i><i class="k">ル</i></span>
<div class="sep" style="left:1310px;top:105px;height:112px"></div>
<span id="t57" class="t " style="left:1327.18px;top:100.50px;font-size:25px;line-height:35px;color:#3B3B3B;font-weight:350;font-family:'Liberation Sans','Noto Sans CJK JP',sans-serif;--ls:0.000px;letter-spacing:0.000px;transform:scaleX(1.121);transform-origin:0 50%;">Σ</span>
<svg class="b" style="left:1361.05px;top:115.80000000000001px;" width="8.5" height="5.2" viewBox="0 0 8.5 5.2"><path d="M1 1 L4.25 4.2 L7.5 1" fill="none" stroke="#242424" stroke-width="1.3" stroke-linecap="round" stroke-linejoin="round"/></svg>
<svg class="b" style="left:1325px;top:140px;" width="22" height="20" viewBox="0 0 22 20"><rect x="1.2" y="1.3" width="19" height="17" fill="#fff" stroke="#4A4A4A" stroke-width="1.3"/><path d="M1.2 4.3H20.2" stroke="#4A4A4A" stroke-width="1.3"/>
<path d="M10.7 6.5V14.5M7.3 11.3L10.7 14.7L14.1 11.3" fill="none" stroke="#1E8BD8" stroke-width="1.4"/></svg>
<svg class="b" style="left:1353.15px;top:147.6px;" width="8.5" height="5.2" viewBox="0 0 8.5 5.2"><path d="M1 1 L4.25 4.2 L7.5 1" fill="none" stroke="#242424" stroke-width="1.3" stroke-linecap="round" stroke-linejoin="round"/></svg>
<svg class="b" style="left:1325px;top:171px;" width="22" height="22" viewBox="0 0 22 22"><path d="M11.5 1.5L20 9.5L9.5 20L1.5 12Z" fill="#fff" stroke="#9B3FB0" stroke-width="1.4" stroke-linejoin="round"/>
<path d="M6 7.5L14.5 15.5L9.5 20L1.5 12Z" fill="#DDA4E6" stroke="#9B3FB0" stroke-width="1.4" stroke-linejoin="round"/></svg>
<svg class="b" style="left:1353.15px;top:179.6px;" width="8.5" height="5.2" viewBox="0 0 8.5 5.2"><path d="M1 1 L4.25 4.2 L7.5 1" fill="none" stroke="#242424" stroke-width="1.3" stroke-linecap="round" stroke-linejoin="round"/></svg>
<span id="t58" class="t " style="left:1401.00px;top:103.70px;font-size:20px;line-height:28px;color:#1E8BD8;font-weight:350;font-family:'Liberation Sans','Noto Sans CJK JP',sans-serif;--ls:0.000px;letter-spacing:0.000px;transform:scaleX(1.038);transform-origin:0 50%;">A</span>
<span id="t59" class="t " style="left:1400.95px;top:121.00px;font-size:20px;line-height:28px;color:#3B3B3B;font-weight:350;font-family:'Liberation Sans','Noto Sans CJK JP',sans-serif;--ls:0.000px;letter-spacing:0.000px;transform:scaleX(1.045);transform-origin:0 50%;">Z</span>
<svg class="b" style="left:1415px;top:117px;" width="23" height="23" viewBox="0 0 23 23"><path d="M1.5 2.5H21L13.5 11V20H9V11Z" fill="#fff" stroke="#4A4A4A" stroke-width="1.4" stroke-linejoin="round"/></svg>
<span id="t60" class="t " style="left:1387.40px;top:148.70px;font-size:15px;line-height:21px;color:#242424;font-weight:350;font-family:'Liberation Sans','Noto Sans CJK JP',sans-serif;--ls:-0.050px;letter-spacing:-0.050px;">並<i class="k">べ</i>替<i class="k">え</i><i class="k">と</i></span>
<span id="t61" class="t " style="left:1383.70px;top:167.90px;font-size:15px;line-height:21px;color:#242424;font-weight:350;font-family:'Liberation Sans','Noto Sans CJK JP',sans-serif;--ls:-0.600px;letter-spacing:-0.600px;"><i class="k">フ</i><i class="ks">ィ</i><i class="k">ル</i><i class="k">タ</i><i class="k">ー</i></span>
<svg class="b" style="left:1443.25px;top:176.0px;" width="8.5" height="5.2" viewBox="0 0 8.5 5.2"><path d="M1 1 L4.25 4.2 L7.5 1" fill="none" stroke="#242424" stroke-width="1.3" stroke-linecap="round" stroke-linejoin="round"/></svg>
<svg class="b" style="left:1464px;top:108px;" width="40" height="40" viewBox="0 0 40 40"><circle cx="24.3" cy="14.2" r="12.6" fill="none" stroke="#4A4A4A" stroke-width="1.4"/><path d="M15.5 23.5L1.5 37" stroke="#4A4A4A" stroke-width="1.5"/></svg>
<span id="t62" class="t " style="left:1463.00px;top:148.70px;font-size:15px;line-height:21px;color:#242424;font-weight:350;font-family:'Liberation Sans','Noto Sans CJK JP',sans-serif;--ls:0.000px;letter-spacing:0.000px;">検索<i class="k">と</i></span>
<span id="t63" class="t " style="left:1460.30px;top:167.90px;font-size:15px;line-height:21px;color:#242424;font-weight:350;font-family:'Liberation Sans','Noto Sans CJK JP',sans-serif;--ls:0.400px;letter-spacing:0.400px;">選択</span>
<svg class="b" style="left:1496.25px;top:176.0px;" width="8.5" height="5.2" viewBox="0 0 8.5 5.2"><path d="M1 1 L4.25 4.2 L7.5 1" fill="none" stroke="#242424" stroke-width="1.3" stroke-linecap="round" stroke-linejoin="round"/></svg>
<span id="t64" class="t " style="left:1399.00px;top:201.00px;font-size:15px;line-height:21px;color:#242424;font-weight:350;font-family:'Liberation Sans','Noto Sans CJK JP',sans-serif;--ls:0.000px;letter-spacing:0.000px;">編集</span>
<div class="sep" style="left:1519px;top:105px;height:112px"></div>
<svg class="b" style="left:1537px;top:108px;" width="38" height="38" viewBox="0 0 38 38"><rect x="2" y="2" width="34" height="34" fill="#fff" stroke="#E8633A" stroke-width="1.8"/>
<rect x="6.5" y="6.5" width="10.5" height="10.5" fill="none" stroke="#E8633A" stroke-width="1.4"/><rect x="21" y="6.5" width="10.5" height="10.5" fill="none" stroke="#E8633A" stroke-width="1.4"/>
<rect x="6.5" y="21" width="10.5" height="10.5" fill="none" stroke="#E8633A" stroke-width="1.4"/><rect x="21" y="21" width="10.5" height="10.5" fill="none" stroke="#E8633A" stroke-width="1.4"/></svg>
<span id="t65" class="t " style="left:1544.00px;top:148.70px;font-size:15px;line-height:21px;color:#242424;font-weight:350;font-family:'Liberation Sans','Noto Sans CJK JP',sans-serif;--ls:1.000px;letter-spacing:1.000px;"><i class="k">ア</i><i class="k">ド</i></span>
<span id="t66" class="t " style="left:1545.00px;top:167.90px;font-size:15px;line-height:21px;color:#242424;font-weight:350;font-family:'Liberation Sans','Noto Sans CJK JP',sans-serif;--ls:-1.000px;letter-spacing:-1.000px;"><i class="k">イ</i><i class="k">ン</i></span>
<span id="t67" class="t " style="left:1532.30px;top:201.00px;font-size:15px;line-height:21px;color:#242424;font-weight:350;font-family:'Liberation Sans','Noto Sans CJK JP',sans-serif;--ls:-0.533px;letter-spacing:-0.533px;"><i class="k">ア</i><i class="k">ド</i><i class="k">イ</i><i class="k">ン</i></span>
<div class="sep" style="left:1591px;top:105px;height:112px"></div>
<svg class="b" style="left:1609px;top:108px;" width="38" height="38" viewBox="0 0 38 38"><rect x="2" y="2" width="34" height="34" fill="#F5F5F5" stroke="#5A5A5A" stroke-width="1.6"/>
<rect x="2.8" y="3.2" width="32.4" height="4.2" fill="#D2D0CE"/><path d="M2 8H36" stroke="#8A8886" stroke-width="1.3"/><path d="M2 16.5H36M2 26H36M13.5 26V36M25 26V36" stroke="#8A8886" stroke-width="1.2"/>
<circle cx="18" cy="16.2" r="10.8" fill="#fff" stroke="#3E3E3E" stroke-width="1.4"/>
<rect x="12.3" y="15.5" width="3.4" height="5.8" fill="#D6D4D2" stroke="#7A7A7A" stroke-width="1"/><rect x="16" y="10" width="3.6" height="11.3" fill="#fff" stroke="#4A4A4A" stroke-width="1.1"/><rect x="20.2" y="12.3" width="3.4" height="9" fill="#7DBDF2" stroke="#1E78C8" stroke-width="1.1"/>
<path d="M25.3 23.8L36.5 36" stroke="#4A4A4A" stroke-width="1.7"/></svg>
<span id="t68" class="t " style="left:1610.00px;top:148.70px;font-size:15px;line-height:21px;color:#242424;font-weight:350;font-family:'Liberation Sans','Noto Sans CJK JP',sans-serif;--ls:0.700px;letter-spacing:0.700px;"><i class="k">デ</i><i class="k">ー</i><i class="k">タ</i></span>
<span id="t69" class="t " style="left:1612.70px;top:167.90px;font-size:15px;line-height:21px;color:#242424;font-weight:350;font-family:'Liberation Sans','Noto Sans CJK JP',sans-serif;--ls:0.600px;letter-spacing:0.600px;">分析</span>
<svg class="b" style="left:1664px;top:108px;" width="40" height="38" viewBox="0 0 40 38"><defs>
<linearGradient id="cg1" x1="0" y1="0" x2="1" y2="1"><stop offset="0" stop-color="#1A9CF2"/><stop offset=".45" stop-color="#1650D8"/><stop offset="1" stop-color="#1B6FE0"/></linearGradient>
<linearGradient id="cg2" x1="0" y1="0" x2="0" y2="1"><stop offset="0" stop-color="#1A9CF2"/><stop offset=".3" stop-color="#1FA3C8"/><stop offset=".58" stop-color="#55B84E"/><stop offset=".85" stop-color="#EFCD1C"/><stop offset="1" stop-color="#F5B53A"/></linearGradient>
<linearGradient id="cg3" x1="0" y1="0" x2="0" y2="1"><stop offset="0" stop-color="#A658F0"/><stop offset=".5" stop-color="#E45AB0"/><stop offset="1" stop-color="#F8925A"/></linearGradient>
<linearGradient id="cg4" x1="0" y1="0" x2="1" y2="0"><stop offset="0" stop-color="#F0543A"/><stop offset="1" stop-color="#F89A5A"/></linearGradient>
</defs>
<path d="M12 2.5H25Q28.5 2.5 29.5 6L31 11H24Q20.5 11 19.5 14.5L17 23Q12 10 12 2.5Z" fill="url(#cg1)"/>
<path d="M12 2.5Q8.5 2.5 7.5 6L2.5 22Q1.5 27 6 27H13Q16 27 17 23.5L21.5 8Q22.5 4.5 19 2.5Z" fill="url(#cg2)"/>
<path d="M28 35.5H15Q11.5 35.5 10.5 32L9.5 27H16Q19.5 27 20.5 23.5L23 15Q28 28 28 35.5Z" fill="url(#cg4)"/>
<path d="M28 35.5Q31.5 35.5 32.5 32L37.5 16Q38.5 11 34 11H27Q24 11 23 14.5L18.5 30Q17.5 33.5 21 35.5Z" fill="url(#cg3)"/></svg>
<span id="t70" class="t " style="left:1658.30px;top:149.50px;font-size:16px;line-height:22px;color:#242424;font-weight:350;font-family:'Liberation Sans','Noto Sans CJK JP',sans-serif;--ls:0.400px;letter-spacing:0.400px;">Copilot</span>
<div class="sep" style="left:1722px;top:105px;height:112px"></div>
<svg class="b" style="left:1770px;top:113px;" width="29" height="31" viewBox="0 0 29 31"><path d="M14.5 26.5H5Q2.5 26.5 2.5 24V5Q2.5 2.5 5 2.5H14L20 8.5V14" fill="none" stroke="#2F6FED" stroke-width="1.4" stroke-linejoin="round" stroke-linecap="round"/>
<path d="M6.5 17.5Q10 14 10.8 8.5Q11.5 7 10.3 7Q9.3 7.5 10 10Q11.5 14.5 15.5 15.5Q9.5 15 6.5 17.5Z" fill="none" stroke="#2F6FED" stroke-width="1" stroke-linejoin="round"/>
<g fill="none" stroke="#2F6FED" stroke-width="1.5"><rect x="11.5" y="20.5" width="9.5" height="5.6" rx="2.8" transform="rotate(-42 16.2 23.3)"/><rect x="17.5" y="15.3" width="9.5" height="5.6" rx="2.8" transform="rotate(-42 22.2 18.1)"/></g></svg>
<span id="t71" class="t " style="left:1737.60px;top:148.70px;font-size:15px;line-height:21px;color:#242424;font-weight:350;font-family:'Liberation Sans','Noto Sans CJK JP',sans-serif;--ls:0.028px;letter-spacing:0.028px;">PDF <i class="k">を</i>作成<i class="k">し</i></span>
<span id="t72" class="t " style="left:1738.50px;top:167.90px;font-size:15px;line-height:21px;color:#242424;font-weight:350;font-family:'Liberation Sans','Noto Sans CJK JP',sans-serif;--ls:-0.834px;letter-spacing:-0.834px;"><i class="k">て</i><i class="k">リ</i><i class="k">ン</i><i class="k">ク</i><i class="k">を</i>共有</span>
<span id="t73" class="t " style="left:1726.80px;top:201.00px;font-size:15px;line-height:21px;color:#242424;font-weight:350;font-family:'Liberation Sans','Noto Sans CJK JP',sans-serif;--ls:0.750px;letter-spacing:0.750px;">Adobe Acrobat</span>
<div class="sep" style="left:1839px;top:105px;height:112px"></div>
<svg class="b" style="left:1884.3px;top:203.55px;" width="13" height="7.5" viewBox="0 0 13 7.5"><path d="M1 1 L6.5 6.5 L12 1" fill="none" stroke="#242424" stroke-width="1.4" stroke-linecap="round" stroke-linejoin="round"/></svg>
<div class="b" style="left:11px;top:234.4px;width:126.5px;height:35.2px;background:#fff;border-radius:6px;border:1px solid #DCDCDC"></div>
<span id="t74" class="t " style="left:18.40px;top:240.90px;font-size:18.3px;line-height:26px;color:#242424;font-weight:350;font-family:'Liberation Sans','Noto Sans CJK JP',sans-serif;--ls:-1.200px;letter-spacing:-1.200px;">B3</span>
<svg class="b" style="left:119.2px;top:249.95px;" width="13" height="7.5" viewBox="0 0 13 7.5"><path d="M1 1 L6.5 6.5 L12 1" fill="none" stroke="#242424" stroke-width="1.4" stroke-linecap="round" stroke-linejoin="round"/></svg>
<svg class="b" style="left:148px;top:245px;" width="5" height="16" viewBox="0 0 5 16"><rect x="1.05" y="1.4" width="2.8" height="2.7" fill="#444"/><rect x="1.05" y="6.3" width="2.8" height="2.7" fill="#444"/><rect x="1.05" y="11.2" width="2.8" height="2.7" fill="#444"/></svg>
<div class="b" style="left:163.5px;top:234.4px;width:106px;height:35.2px;background:#fff;border-radius:6px;border:1px solid #DCDCDC"></div>
<svg class="b" style="left:170px;top:244px;" width="18" height="18" viewBox="0 0 18 18"><path d="M1.5 1.5L16 16M16 1.5L1.5 16" stroke="#A6A6A6" stroke-width="1.3"/></svg>
<svg class="b" style="left:198px;top:244px;" width="22" height="18" viewBox="0 0 22 18"><path d="M1 9.5L7.5 16L20.5 1.5" fill="none" stroke="#A6A6A6" stroke-width="1.3"/></svg>
<span id="t75" class="t " style="left:230.20px;top:234.30px;font-size:22px;line-height:31px;color:#333;font-weight:400;font-family:'Liberation Serif',serif;--ls:1.600px;letter-spacing:1.600px;font-style:italic;-webkit-text-stroke:.35px #333;">fx</span>
<svg class="b" style="left:254.8px;top:250.2px;" width="12" height="7" viewBox="0 0 12 7"><path d="M1 1 L6.0 6 L11 1" fill="none" stroke="#8A8A8A" stroke-width="1.3" stroke-linecap="round" stroke-linejoin="round"/></svg>
<div class="b" style="left:275.3px;top:234.4px;width:1633.7px;height:35.2px;background:#fff;border-radius:6px;border:1px solid #DCDCDC"></div>
<span id="t76" class="t " style="left:289.40px;top:241.50px;font-size:16.57px;line-height:23px;color:#242424;font-weight:400;font-family:'Liberation Mono','Noto Sans CJK JP',monospace;--ls:0.121px;letter-spacing:0.121px;">=NETWORKDAYS.INTL(B1,B2,,E:E)</span>
<div class="b" style="left:287px;top:265.3px;width:292.5px;height:4.3px;background:#F40000"></div>
<svg class="b" style="left:1890.0px;top:246.75px;" width="13" height="7.5" viewBox="0 0 13 7.5"><path d="M1 1 L6.5 6.5 L12 1" fill="none" stroke="#3B3B3B" stroke-width="1.4" stroke-linecap="round" stroke-linejoin="round"/></svg>
<div class="b" style="left:0px;top:278px;width:1893px;height:734px;background:#fff"></div>
<div class="b" style="left:35px;top:300px;width:132px;height:104px;background:#D9E1F2"></div>
<div class="b" style="left:385px;top:300px;width:87px;height:34px;background:#FCE4D6"></div>
<svg class="b" style="left:0px;top:0px;" width="1893" height="1012" viewBox="0 0 1893 1012"><path d="M35 334.5H1893M35 369.5H1893M35 404.5H1893M35 439.5H1893M35 474.5H1893M35 509.5H1893M35 544.5H1893M35 579.5H1893M35 614.5H1893M35 649.5H1893M35 684.5H1893M35 719.5H1893M35 754.5H1893M35 789.5H1893M35 824.5H1893M35 859.5H1893M35 894.5H1893M35 929.5H1893M35 964.5H1893M35 999.5H1893M167.5 300V1012M340.5 300V1012M384.5 300V1012M472.5 300V1012M588.5 300V1012M720.5 300V1012M801.5 300V1012M882.5 300V1012M963.5 300V1012M1044.5 300V1012M1125.5 300V1012M1206.5 300V1012M1287.5 300V1012M1368.5 300V1012M1449.5 300V1012M1530.5 300V1012M1611.5 300V1012M1692.5 300V1012M1773.5 300V1012M1854.5 300V1012" stroke="#E1E1E1" stroke-width="1" fill="none" shape-rendering="crispEdges"/></svg>
<div class="b" style="left:35px;top:300px;width:133px;height:105px;background:#D9E1F2"></div>
<div class="b" style="left:384px;top:300px;width:89px;height:35px;background:#FCE4D6"></div>
<div class="b" style="left:0px;top:278px;width:1893px;height:21px;background:#EFEFEF"></div>
<div class="b" style="left:168px;top:278px;width:172px;height:21px;background:#D2D2D2"></div>
<svg class="b" style="left:0px;top:0px;" width="1893" height="300" viewBox="0 0 1893 300"><path d="M34.5 278V299M167.5 278V299M340.5 278V299M384.5 278V299M472.5 278V299M588.5 278V299M720.5 278V299M801.5 278V299M882.5 278V299M963.5 278V299M1044.5 278V299M1125.5 278V299M1206.5 278V299M1287.5 278V299M1368.5 278V299M1449.5 278V299M1530.5 278V299M1611.5 278V299M1692.5 278V299M1773.5 278V299M1854.5 278V299" stroke="#B4B4B4" stroke-width="1" fill="none" shape-rendering="crispEdges"/></svg>
<div class="b" style="left:0px;top:298.5px;width:1893px;height:1px;background:#9C9C9C"></div>
<div class="b" style="left:167px;top:297.5px;width:174px;height:2.5px;background:#0E6E3A"></div>
<svg class="b" style="left:17px;top:283px;" width="15" height="13" viewBox="0 0 15 13"><path d="M14 0.5V12.5H1Z" fill="#B7B7B7"/></svg>
<span class="t" style="left:81.0px;width:40px;text-align:center;top:277px;line-height:24px;font-size:17.6px;font-weight:300;font-family:'Noto Sans CJK JP','Liberation Sans',sans-serif;color:#262626;transform:scaleX(1.1)">A</span>
<span class="t" style="left:234.0px;width:40px;text-align:center;top:277px;line-height:24px;font-size:17.6px;font-weight:300;font-family:'Noto Sans CJK JP','Liberation Sans',sans-serif;color:#107C41;transform:scaleX(1.1)">B</span>
<span class="t" style="left:342.5px;width:40px;text-align:center;top:277px;line-height:24px;font-size:17.6px;font-weight:300;font-family:'Noto Sans CJK JP','Liberation Sans',sans-serif;color:#262626;transform:scaleX(1.1)">C</span>
<span class="t" style="left:408.5px;width:40px;text-align:center;top:277px;line-height:24px;font-size:17.6px;font-weight:300;font-family:'Noto Sans CJK JP','Liberation Sans',sans-serif;color:#262626;transform:scaleX(1.1)">D</span>
<span class="t" style="left:510.5px;width:40px;text-align:center;top:277px;line-height:24px;font-size:17.6px;font-weight:300;font-family:'Noto Sans CJK JP','Liberation Sans',sans-serif;color:#262626;transform:scaleX(1.1)">E</span>
<span class="t" style="left:634.5px;width:40px;text-align:center;top:277px;line-height:24px;font-size:17.6px;font-weight:300;font-family:'Noto Sans CJK JP','Liberation Sans',sans-serif;color:#262626;transform:scaleX(1.1)">F</span>
<span class="t" style="left:741.0px;width:40px;text-align:center;top:277px;line-height:24px;font-size:17.6px;font-weight:300;font-family:'Noto Sans CJK JP','Liberation Sans',sans-serif;color:#262626;transform:scaleX(1.1)">G</span>
<span class="t" style="left:822.0px;width:40px;text-align:center;top:277px;line-height:24px;font-size:17.6px;font-weight:300;font-family:'Noto Sans CJK JP','Liberation Sans',sans-serif;color:#262626;transform:scaleX(1.1)">H</span>
<span class="t" style="left:903.0px;width:40px;text-align:center;top:277px;line-height:24px;font-size:17.6px;font-weight:300;font-family:'Noto Sans CJK JP','Liberation Sans',sans-serif;color:#262626;transform:scaleX(1.1)">I</span>
<span class="t" style="left:984.0px;width:40px;text-align:center;top:277px;line-height:24px;font-size:17.6px;font-weight:300;font-family:'Noto Sans CJK JP','Liberation Sans',sans-serif;color:#262626;transform:scaleX(1.1)">J</span>
<span class="t" style="left:1065.0px;width:40px;text-align:center;top:277px;line-height:24px;font-size:17.6px;font-weight:300;font-family:'Noto Sans CJK JP','Liberation Sans',sans-serif;color:#262626;transform:scaleX(1.1)">K</span>
<span class="t" style="left:1146.0px;width:40px;text-align:center;top:277px;line-height:24px;font-size:17.6px;font-weight:300;font-family:'Noto Sans CJK JP','Liberation Sans',sans-serif;color:#262626;transform:scaleX(1.1)">L</span>
<span class="t" style="left:1227.0px;width:40px;text-align:center;top:277px;line-height:24px;font-size:17.6px;font-weight:300;font-family:'Noto Sans CJK JP','Liberation Sans',sans-serif;color:#262626;transform:scaleX(1.1)">M</span>
<span class="t" style="left:1308.0px;width:40px;text-align:center;top:277px;line-height:24px;font-size:17.6px;font-weight:300;font-family:'Noto Sans CJK JP','Liberation Sans',sans-serif;color:#262626;transform:scaleX(1.1)">N</span>
<span class="t" style="left:1389.0px;width:40px;text-align:center;top:277px;line-height:24px;font-size:17.6px;font-weight:300;font-family:'Noto Sans CJK JP','Liberation Sans',sans-serif;color:#262626;transform:scaleX(1.1)">O</span>
<span class="t" style="left:1470.0px;width:40px;text-align:center;top:277px;line-height:24px;font-size:17.6px;font-weight:300;font-family:'Noto Sans CJK JP','Liberation Sans',sans-serif;color:#262626;transform:scaleX(1.1)">P</span>
<span class="t" style="left:1551.0px;width:40px;text-align:center;top:277px;line-height:24px;font-size:17.6px;font-weight:300;font-family:'Noto Sans CJK JP','Liberation Sans',sans-serif;color:#262626;transform:scaleX(1.1)">Q</span>
<span class="t" style="left:1632.0px;width:40px;text-align:center;top:277px;line-height:24px;font-size:17.6px;font-weight:300;font-family:'Noto Sans CJK JP','Liberation Sans',sans-serif;color:#262626;transform:scaleX(1.1)">R</span>
<span class="t" style="left:1713.0px;width:40px;text-align:center;top:277px;line-height:24px;font-size:17.6px;font-weight:300;font-family:'Noto Sans CJK JP','Liberation Sans',sans-serif;color:#262626;transform:scaleX(1.1)">S</span>
<span class="t" style="left:1794.0px;width:40px;text-align:center;top:277px;line-height:24px;font-size:17.6px;font-weight:300;font-family:'Noto Sans CJK JP','Liberation Sans',sans-serif;color:#262626;transform:scaleX(1.1)">T</span>
<span class="t" style="left:1875.0px;width:40px;text-align:center;top:277px;line-height:24px;font-size:17.6px;font-weight:300;font-family:'Noto Sans CJK JP','Liberation Sans',sans-serif;color:#262626;transform:scaleX(1.1)">U</span>
<div class="b" style="left:0px;top:300px;width:34px;height:712px;background:#EFEFEF"></div>
<div class="b" style="left:0px;top:370px;width:34px;height:34px;background:#D2D2D2"></div>
<div class="b" style="left:34px;top:300px;width:1px;height:712px;background:#A6A6A6"></div>
<div class="b" style="left:33px;top:369px;width:2.5px;height:36px;background:#107C41"></div>
<svg class="b" style="left:0px;top:0px;" width="35" height="1012" viewBox="0 0 35 1012"><path d="M1 334.5H34M1 369.5H34M1 404.5H34M1 439.5H34M1 474.5H34M1 509.5H34M1 544.5H34M1 579.5H34M1 614.5H34M1 649.5H34M1 684.5H34M1 719.5H34M1 754.5H34M1 789.5H34M1 824.5H34M1 859.5H34M1 894.5H34M1 929.5H34M1 964.5H34M1 999.5H34" stroke="#ABABAB" stroke-width="1" fill="none" shape-rendering="crispEdges"/></svg>
<span class="t" style="left:0;width:34.6px;text-align:center;top:311.3px;line-height:24px;font-size:17.6px;font-weight:300;font-family:'Noto Sans CJK JP','Liberation Sans',sans-serif;color:#262626">1</span>
<span class="t" style="left:0;width:34.6px;text-align:center;top:346.3px;line-height:24px;font-size:17.6px;font-weight:300;font-family:'Noto Sans CJK JP','Liberation Sans',sans-serif;color:#262626">2</span>
<span class="t" style="left:0;width:34.6px;text-align:center;top:381.3px;line-height:24px;font-size:17.6px;font-weight:300;font-family:'Noto Sans CJK JP','Liberation Sans',sans-serif;color:#107C41">3</span>
<span class="t" style="left:0;width:34.6px;text-align:center;top:416.3px;line-height:24px;font-size:17.6px;font-weight:300;font-family:'Noto Sans CJK JP','Liberation Sans',sans-serif;color:#262626">4</span>
<span class="t" style="left:0;width:34.6px;text-align:center;top:451.3px;line-height:24px;font-size:17.6px;font-weight:300;font-family:'Noto Sans CJK JP','Liberation Sans',sans-serif;color:#262626">5</span>
<span class="t" style="left:0;width:34.6px;text-align:center;top:486.3px;line-height:24px;font-size:17.6px;font-weight:300;font-family:'Noto Sans CJK JP','Liberation Sans',sans-serif;color:#262626">6</span>
<span class="t" style="left:0;width:34.6px;text-align:center;top:521.3px;line-height:24px;font-size:17.6px;font-weight:300;font-family:'Noto Sans CJK JP','Liberation Sans',sans-serif;color:#262626">7</span>
<span class="t" style="left:0;width:34.6px;text-align:center;top:556.3px;line-height:24px;font-size:17.6px;font-weight:300;font-family:'Noto Sans CJK JP','Liberation Sans',sans-serif;color:#262626">8</span>
<span class="t" style="left:0;width:34.6px;text-align:center;top:591.3px;line-height:24px;font-size:17.6px;font-weight:300;font-family:'Noto Sans CJK JP','Liberation Sans',sans-serif;color:#262626">9</span>
<span class="t" style="left:0;width:34.6px;text-align:center;top:626.3px;line-height:24px;font-size:17.6px;font-weight:300;font-family:'Noto Sans CJK JP','Liberation Sans',sans-serif;color:#262626">10</span>
<span class="t" style="left:0;width:34.6px;text-align:center;top:661.3px;line-height:24px;font-size:17.6px;font-weight:300;font-family:'Noto Sans CJK JP','Liberation Sans',sans-serif;color:#262626">11</span>
<span class="t" style="left:0;width:34.6px;text-align:center;top:696.3px;line-height:24px;font-size:17.6px;font-weight:300;font-family:'Noto Sans CJK JP','Liberation Sans',sans-serif;color:#262626">12</span>
<span class="t" style="left:0;width:34.6px;text-align:center;top:731.3px;line-height:24px;font-size:17.6px;font-weight:300;font-family:'Noto Sans CJK JP','Liberation Sans',sans-serif;color:#262626">13</span>
<span class="t" style="left:0;width:34.6px;text-align:center;top:766.3px;line-height:24px;font-size:17.6px;font-weight:300;font-family:'Noto Sans CJK JP','Liberation Sans',sans-serif;color:#262626">14</span>
<span class="t" style="left:0;width:34.6px;text-align:center;top:801.3px;line-height:24px;font-size:17.6px;font-weight:300;font-family:'Noto Sans CJK JP','Liberation Sans',sans-serif;color:#262626">15</span>
<span class="t" style="left:0;width:34.6px;text-align:center;top:836.3px;line-height:24px;font-size:17.6px;font-weight:300;font-family:'Noto Sans CJK JP','Liberation Sans',sans-serif;color:#262626">16</span>
<span class="t" style="left:0;width:34.6px;text-align:center;top:871.3px;line-height:24px;font-size:17.6px;font-weight:300;font-family:'Noto Sans CJK JP','Liberation Sans',sans-serif;color:#262626">17</span>
<span class="t" style="left:0;width:34.6px;text-align:center;top:906.3px;line-height:24px;font-size:17.6px;font-weight:300;font-family:'Noto Sans CJK JP','Liberation Sans',sans-serif;color:#262626">18</span>
<span class="t" style="left:0;width:34.6px;text-align:center;top:941.3px;line-height:24px;font-size:17.6px;font-weight:300;font-family:'Noto Sans CJK JP','Liberation Sans',sans-serif;color:#262626">19</span>
<span class="t" style="left:0;width:34.6px;text-align:center;top:976.3px;line-height:24px;font-size:17.6px;font-weight:300;font-family:'Noto Sans CJK JP','Liberation Sans',sans-serif;color:#262626">20</span>
<span class="t" style="left:0;width:34.6px;text-align:center;top:1011.3px;line-height:24px;font-size:17.6px;font-weight:300;font-family:'Noto Sans CJK JP','Liberation Sans',sans-serif;color:#262626">21</span>
<span class="t" style="left:0.7999999999999972px;width:200px;text-align:center;top:297.7px;line-height:33px;font-size:17.6px;font-weight:700;font-family:'Noto Sans CJK JP','Liberation Sans',sans-serif;color:#111;letter-spacing:0.3px">基準日</span>
<span class="t" style="left:0.7999999999999972px;width:200px;text-align:center;top:332.7px;line-height:33px;font-size:17.6px;font-weight:700;font-family:'Noto Sans CJK JP','Liberation Sans',sans-serif;color:#111;letter-spacing:0.3px">締切日</span>
<span class="t" style="left:0.7999999999999972px;width:200px;text-align:center;top:367.7px;line-height:33px;font-size:17.6px;font-weight:700;font-family:'Noto Sans CJK JP','Liberation Sans',sans-serif;color:#111;letter-spacing:0.3px">実働日数</span>
<span class="t" style="right:1583.5px;text-align:right;top:299.5px;line-height:33px;font-size:17.6px;font-weight:350;font-family:'Noto Sans CJK JP','Liberation Sans',sans-serif;color:#111;letter-spacing:0.66px">2025/9/24</span>
<span class="t" style="right:1583.5px;text-align:right;top:334.5px;line-height:33px;font-size:17.6px;font-weight:350;font-family:'Noto Sans CJK JP','Liberation Sans',sans-serif;color:#111;letter-spacing:0.66px">2025/10/17</span>
<span class="t" style="right:1583.5px;text-align:right;top:369.5px;line-height:33px;font-size:17.6px;font-weight:350;font-family:'Noto Sans CJK JP','Liberation Sans',sans-serif;color:#111;letter-spacing:0.66px">15</span>
<span class="t" style="left:328.8px;width:200px;text-align:center;top:297.7px;line-height:33px;font-size:17.6px;font-weight:700;font-family:'Noto Sans CJK JP','Liberation Sans',sans-serif;color:#111;letter-spacing:0.3px">祝祭日</span>
<span class="t" style="right:1335.5px;text-align:right;top:299.5px;line-height:33px;font-size:17.6px;font-weight:350;font-family:'Noto Sans CJK JP','Liberation Sans',sans-serif;color:#111;letter-spacing:0.66px">2025/1/1</span>
<span class="t" style="left:592px;top:298.8px;line-height:33px;font-size:17.6px;font-weight:350;font-family:'Noto Sans CJK JP','Liberation Sans',sans-serif;color:#111;letter-spacing:0.55px">元日</span>
<span class="t" style="right:1335.5px;text-align:right;top:334.5px;line-height:33px;font-size:17.6px;font-weight:350;font-family:'Noto Sans CJK JP','Liberation Sans',sans-serif;color:#111;letter-spacing:0.66px">2025/1/13</span>
<span class="t" style="left:592px;top:333.8px;line-height:33px;font-size:17.6px;font-weight:350;font-family:'Noto Sans CJK JP','Liberation Sans',sans-serif;color:#111;letter-spacing:0.55px">成人の日</span>
<span class="t" style="right:1335.5px;text-align:right;top:369.5px;line-height:33px;font-size:17.6px;font-weight:350;font-family:'Noto Sans CJK JP','Liberation Sans',sans-serif;color:#111;letter-spacing:0.66px">2025/2/11</span>
<span class="t" style="left:592px;top:368.8px;line-height:33px;font-size:17.6px;font-weight:350;font-family:'Noto Sans CJK JP','Liberation Sans',sans-serif;color:#111;letter-spacing:0.55px">建国記念の日</span>
<span class="t" style="right:1335.5px;text-align:right;top:404.5px;line-height:33px;font-size:17.6px;font-weight:350;font-family:'Noto Sans CJK JP','Liberation Sans',sans-serif;color:#111;letter-spacing:0.66px">2025/2/23</span>
<span class="t" style="left:592px;top:403.8px;line-height:33px;font-size:17.6px;font-weight:350;font-family:'Noto Sans CJK JP','Liberation Sans',sans-serif;color:#111;letter-spacing:0.55px">天皇誕生日</span>
<span class="t" style="right:1335.5px;text-align:right;top:439.5px;line-height:33px;font-size:17.6px;font-weight:350;font-family:'Noto Sans CJK JP','Liberation Sans',sans-serif;color:#111;letter-spacing:0.66px">2025/2/24</span>
<span class="t" style="left:592px;top:438.8px;line-height:33px;font-size:17.6px;font-weight:350;font-family:'Noto Sans CJK JP','Liberation Sans',sans-serif;color:#111;letter-spacing:0.55px">休日</span>
<span class="t" style="right:1335.5px;text-align:right;top:474.5px;line-height:33px;font-size:17.6px;font-weight:350;font-family:'Noto Sans CJK JP','Liberation Sans',sans-serif;color:#111;letter-spacing:0.66px">2025/3/20</span>
<span class="t" style="left:592px;top:473.8px;line-height:33px;font-size:17.6px;font-weight:350;font-family:'Noto Sans CJK JP','Liberation Sans',sans-serif;color:#111;letter-spacing:0.55px">春分の日</span>
<span class="t" style="right:1335.5px;text-align:right;top:509.5px;line-height:33px;font-size:17.6px;font-weight:350;font-family:'Noto Sans CJK JP','Liberation Sans',sans-serif;color:#111;letter-spacing:0.66px">2025/4/29</span>
<span class="t" style="left:592px;top:508.8px;line-height:33px;font-size:17.6px;font-weight:350;font-family:'Noto Sans CJK JP','Liberation Sans',sans-serif;color:#111;letter-spacing:0.55px">昭和の日</span>
<span class="t" style="right:1335.5px;text-align:right;top:544.5px;line-height:33px;font-size:17.6px;font-weight:350;font-family:'Noto Sans CJK JP','Liberation Sans',sans-serif;color:#111;letter-spacing:0.66px">2025/5/3</span>
<span class="t" style="left:592px;top:543.8px;line-height:33px;font-size:17.6px;font-weight:350;font-family:'Noto Sans CJK JP','Liberation Sans',sans-serif;color:#111;letter-spacing:0.55px">憲法記念日</span>
<span class="t" style="right:1335.5px;text-align:right;top:579.5px;line-height:33px;font-size:17.6px;font-weight:350;font-family:'Noto Sans CJK JP','Liberation Sans',sans-serif;color:#111;letter-spacing:0.66px">2025/5/4</span>
<span class="t" style="left:592px;top:578.8px;line-height:33px;font-size:17.6px;font-weight:350;font-family:'Noto Sans CJK JP','Liberation Sans',sans-serif;color:#111;letter-spacing:0.55px">みどりの日</span>
<span class="t" style="right:1335.5px;text-align:right;top:614.5px;line-height:33px;font-size:17.6px;font-weight:350;font-family:'Noto Sans CJK JP','Liberation Sans',sans-serif;color:#111;letter-spacing:0.66px">2025/5/5</span>
<span class="t" style="left:592px;top:613.8px;line-height:33px;font-size:17.6px;font-weight:350;font-family:'Noto Sans CJK JP','Liberation Sans',sans-serif;color:#111;letter-spacing:0.55px">こどもの日</span>
<span class="t" style="right:1335.5px;text-align:right;top:649.5px;line-height:33px;font-size:17.6px;font-weight:350;font-family:'Noto Sans CJK JP','Liberation Sans',sans-serif;color:#111;letter-spacing:0.66px">2025/5/6</span>
<span class="t" style="left:592px;top:648.8px;line-height:33px;font-size:17.6px;font-weight:350;font-family:'Noto Sans CJK JP','Liberation Sans',sans-serif;color:#111;letter-spacing:0.55px">休日</span>
<span class="t" style="right:1335.5px;text-align:right;top:684.5px;line-height:33px;font-size:17.6px;font-weight:350;font-family:'Noto Sans CJK JP','Liberation Sans',sans-serif;color:#111;letter-spacing:0.66px">2025/7/21</span>
<span class="t" style="left:592px;top:683.8px;line-height:33px;font-size:17.6px;font-weight:350;font-family:'Noto Sans CJK JP','Liberation Sans',sans-serif;color:#111;letter-spacing:0.55px">海の日</span>
<span class="t" style="right:1335.5px;text-align:right;top:719.5px;line-height:33px;font-size:17.6px;font-weight:350;font-family:'Noto Sans CJK JP','Liberation Sans',sans-serif;color:#111;letter-spacing:0.66px">2025/8/11</span>
<span class="t" style="left:592px;top:718.8px;line-height:33px;font-size:17.6px;font-weight:350;font-family:'Noto Sans CJK JP','Liberation Sans',sans-serif;color:#111;letter-spacing:0.55px">山の日</span>
<span class="t" style="right:1335.5px;text-align:right;top:754.5px;line-height:33px;font-size:17.6px;font-weight:350;font-family:'Noto Sans CJK JP','Liberation Sans',sans-serif;color:#111;letter-spacing:0.66px">2025/9/15</span>
<span class="t" style="left:592px;top:753.8px;line-height:33px;font-size:17.6px;font-weight:350;font-family:'Noto Sans CJK JP','Liberation Sans',sans-serif;color:#111;letter-spacing:0.55px">敬老の日</span>
<span class="t" style="right:1335.5px;text-align:right;top:789.5px;line-height:33px;font-size:17.6px;font-weight:350;font-family:'Noto Sans CJK JP','Liberation Sans',sans-serif;color:#111;letter-spacing:0.66px">2025/9/23</span>
<span class="t" style="left:592px;top:788.8px;line-height:33px;font-size:17.6px;font-weight:350;font-family:'Noto Sans CJK JP','Liberation Sans',sans-serif;color:#111;letter-spacing:0.55px">秋分の日</span>
<span class="t" style="right:1335.5px;text-align:right;top:824.5px;line-height:33px;font-size:17.6px;font-weight:350;font-family:'Noto Sans CJK JP','Liberation Sans',sans-serif;color:#111;letter-spacing:0.66px">2025/10/13</span>
<span class="t" style="left:592px;top:823.8px;line-height:33px;font-size:17.6px;font-weight:350;font-family:'Noto Sans CJK JP','Liberation Sans',sans-serif;color:#111;letter-spacing:0.55px">スポーツの日</span>
<span class="t" style="right:1335.5px;text-align:right;top:859.5px;line-height:33px;font-size:17.6px;font-weight:350;font-family:'Noto Sans CJK JP','Liberation Sans',sans-serif;color:#111;letter-spacing:0.66px">2025/11/3</span>
<span class="t" style="left:592px;top:858.8px;line-height:33px;font-size:17.6px;font-weight:350;font-family:'Noto Sans CJK JP','Liberation Sans',sans-serif;color:#111;letter-spacing:0.55px">文化の日</span>
<span class="t" style="right:1335.5px;text-align:right;top:894.5px;line-height:33px;font-size:17.6px;font-weight:350;font-family:'Noto Sans CJK JP','Liberation Sans',sans-serif;color:#111;letter-spacing:0.66px">2025/11/23</span>
<span class="t" style="left:592px;top:893.8px;line-height:33px;font-size:17.6px;font-weight:350;font-family:'Noto Sans CJK JP','Liberation Sans',sans-serif;color:#111;letter-spacing:0.55px">勤労感謝の日</span>
<span class="t" style="right:1335.5px;text-align:right;top:929.5px;line-height:33px;font-size:17.6px;font-weight:350;font-family:'Noto Sans CJK JP','Liberation Sans',sans-serif;color:#111;letter-spacing:0.66px">2025/11/24</span>
<span class="t" style="left:592px;top:928.8px;line-height:33px;font-size:17.6px;font-weight:350;font-family:'Noto Sans CJK JP','Liberation Sans',sans-serif;color:#111;letter-spacing:0.55px">休日</span>
<span class="t" style="right:1335.5px;text-align:right;top:964.5px;line-height:33px;font-size:17.6px;font-weight:350;font-family:'Noto Sans CJK JP','Liberation Sans',sans-serif;color:#111;letter-spacing:0.66px">2025/9/22</span>
<span class="t" style="left:592px;top:963.8px;line-height:33px;font-size:17.6px;font-weight:350;font-family:'Noto Sans CJK JP','Liberation Sans',sans-serif;color:#111;letter-spacing:0.55px">代休</span>
<span class="t" style="right:1335.5px;text-align:right;top:999.5px;line-height:33px;font-size:17.6px;font-weight:350;font-family:'Noto Sans CJK JP','Liberation Sans',sans-serif;color:#111;letter-spacing:0.66px">2025/9/29</span>
<span class="t" style="left:592px;top:998.8px;line-height:33px;font-size:17.6px;font-weight:350;font-family:'Noto Sans CJK JP','Liberation Sans',sans-serif;color:#111;letter-spacing:0.55px">出張</span>
<div class="b" style="left:166px;top:369px;width:176px;height:37px;border:2px solid #107C41"></div>
<div class="b" style="left:165.5px;top:363px;width:182.5px;height:44.7px;border:7px solid #FF0000;border-radius:9px;box-shadow:1px 2px 3px rgba(0,0,0,.55), inset 2px 3px 3.5px rgba(0,0,0,.7)"></div>
<svg class="b" style="left:288px;top:408px;overflow:visible" width="76" height="76" viewBox="0 0 76 76">
<defs><filter id="ol" x="-30%" y="-30%" width="160%" height="160%"><feMorphology in="SourceAlpha" operator="dilate" radius="2.2" result="d"/><feFlood flood-color="#fff"/><feComposite in2="d" operator="in" result="w"/><feGaussianBlur in="d" stdDeviation="1.8" result="b"/><feOffset in="b" dx="1" dy="2" result="sh"/><feComponentTransfer in="sh" result="sh2"><feFuncA type="linear" slope=".55"/></feComponentTransfer><feMerge><feMergeNode in="sh2"/><feMergeNode in="w"/><feMergeNode in="SourceGraphic"/></feMerge></filter></defs>
<text x="37.8" y="58.7" text-anchor="middle" font-family="'IPAGothic','Noto Sans CJK JP',sans-serif" font-weight="400" font-size="54.2" fill="#FF0000" stroke="#FF0000" stroke-width="1.2" filter="url(#ol)">②</text>
</svg>
<div class="b" style="left:1893px;top:278px;width:27px;height:734px;background:#E6E9EA"></div>
<div class="b" style="left:1896px;top:278px;width:21px;height:737px;background:#F5F5F5;border-radius:10.5px"></div>
<div class="b" style="left:1901px;top:298.7px;width:11px;height:498.5px;background:#707070;border-radius:5.5px"></div>
<svg class="b" style="left:1900px;top:283px;" width="13" height="11" viewBox="0 0 13 11"><path d="M6.5 1.8L11.3 8.6H1.7Z" fill="#707070" stroke="#707070" stroke-width="1.6" stroke-linejoin="round"/></svg>
<svg class="b" style="left:1900px;top:999px;" width="13" height="11" viewBox="0 0 13 11"><path d="M6.5 9.2L11.3 2.4H1.7Z" fill="#707070" stroke="#707070" stroke-width="1.6" stroke-linejoin="round"/></svg>
<div class="b" style="left:0px;top:1012px;width:1893px;height:40px;background:#E6E9EA"></div>
<div class="b" style="left:319.5px;top:1012px;width:223px;height:34.5px;background:#fff;border-radius:0 0 7px 7px"></div>
<svg class="b" style="left:312.5px;top:1012px;" width="8" height="8" viewBox="0 0 8 8"><path d="M8 0V8Q8 0 0 0Z" fill="#fff"/></svg>
<svg class="b" style="left:542px;top:1012px;" width="8" height="8" viewBox="0 0 8 8"><path d="M0 0V8Q0 0 8 0Z" fill="#fff"/></svg>
<div class="b" style="left:330px;top:1041.8px;width:203.5px;height:2.4px;background:#107C41;border-radius:1.2px"></div>
<svg class="b" style="left:31px;top:1023px;" width="12" height="16" viewBox="0 0 12 16"><path d="M9 1.8L2.5 8L9 14.2" fill="none" stroke="#A0A0A0" stroke-width="1.4"/></svg>
<svg class="b" style="left:71px;top:1023px;" width="12" height="16" viewBox="0 0 12 16"><path d="M3 1.8L9.5 8L3 14.2" fill="none" stroke="#A0A0A0" stroke-width="1.4"/></svg>
<span id="t77" class="t " style="left:156.50px;top:1021.40px;font-size:17.6px;line-height:25px;color:#333;font-weight:350;font-family:'Liberation Sans','Noto Sans CJK JP',sans-serif;--ls:0.100px;letter-spacing:0.100px;">NETWORKDAYS</span>
<div class="b" style="left:315px;top:1020px;width:1px;height:23px;background:#C8C8C8"></div>
<span id="t78" class="t " style="left:337.50px;top:1017.90px;font-size:17.6px;line-height:25px;color:#333;font-weight:350;font-family:'Liberation Sans','Noto Sans CJK JP',sans-serif;--ls:0.267px;letter-spacing:0.267px;">NETWORKDAYS_INTL</span>
<div class="b" style="left:549px;top:1020px;width:1px;height:23px;background:#C8C8C8"></div>
<svg class="b" style="left:601px;top:1023px;" width="16" height="16" viewBox="0 0 16 16"><path d="M8 1.5V14.5M1.5 8H14.5" stroke="#333" stroke-width="1.4"/></svg>
<svg class="b" style="left:1373px;top:1025px;" width="6" height="15" viewBox="0 0 6 15"><circle cx="3" cy="2.2" r="1.3" fill="#333"/><circle cx="3" cy="7.3" r="1.3" fill="#333"/><circle cx="3" cy="12.4" r="1.3" fill="#333"/></svg>
<div class="b" style="left:1396px;top:1021px;width:500px;height:21px;background:#F5F5F5;border-radius:10.5px"></div>
<div class="b" style="left:1417.5px;top:1026px;width:446.5px;height:11px;background:#707070;border-radius:5.5px"></div>
<svg class="b" style="left:1401px;top:1025px;" width="11" height="13" viewBox="0 0 11 13"><path d="M1.8 6.5L8.6 1.7V11.3Z" fill="#707070" stroke="#707070" stroke-width="1.6" stroke-linejoin="round"/></svg>
<svg class="b" style="left:1880px;top:1025px;" width="11" height="13" viewBox="0 0 11 13"><path d="M9.2 6.5L2.4 1.7V11.3Z" fill="#707070" stroke="#707070" stroke-width="1.6" stroke-linejoin="round"/></svg>
<div class="b" style="left:0px;top:1052px;width:1920px;height:28px;background:#F3F3F3;border-top:1px solid #C6C6C6"></div>
<span id="t79" class="t " style="left:15.50px;top:1056.90px;font-size:14.3px;line-height:20px;color:#333;font-weight:350;font-family:'Liberation Sans','Noto Sans CJK JP',sans-serif;--ls:1.334px;letter-spacing:1.334px;">準備完了</span>
<svg class="b" style="left:101px;top:1058px;" width="19" height="17" viewBox="0 0 19 17"><path d="M1.1 15.5V1.2H17.6V5.5" fill="none" stroke="#444" stroke-width="1.6"/><path d="M1 3.9H17.6" stroke="#444" stroke-width="1.3"/><path d="M3.3 7.6H6.5M3.3 10.6H5.5" stroke="#444" stroke-width="1.2"/><path d="M0.3 14.7H7.5" stroke="#444" stroke-width="1.5"/>
<circle cx="11.9" cy="11" r="5.1" fill="#F3F3F3" stroke="#444" stroke-width="1.4"/><circle cx="11.9" cy="11" r="2.4" fill="#333"/></svg>
<svg class="b" style="left:140px;top:1057px;" width="21" height="19" viewBox="0 0 21 19"><circle cx="8.75" cy="2.7" r="1.9" fill="none" stroke="#444" stroke-width="1.2"/>
<path d="M2 5.3C3 3.6 4.6 4.6 5.6 5.6S7.2 7 8.75 7S10.9 6.6 11.9 5.6S14.5 3.6 15.5 5.3" fill="none" stroke="#444" stroke-width="1.3" stroke-linecap="round"/>
<path d="M6.3 6.6C7 10 6.2 11.5 5.3 13.2S4.2 16.3 5 16.8M11.2 6.6C10.6 8.5 10.8 10 12.5 10.6" fill="none" stroke="#444" stroke-width="1.3" stroke-linecap="round"/>
<path d="M10 13.8L13.4 17.1L19.2 11" fill="none" stroke="#444" stroke-width="1.4"/></svg>
<span id="t80" class="t " style="left:162.00px;top:1056.90px;font-size:14.3px;line-height:20px;color:#333;font-weight:350;font-family:'Liberation Sans','Noto Sans CJK JP',sans-serif;--ls:0.188px;letter-spacing:0.188px;"><i class="k">ア</i><i class="k">ク</i><i class="k">セ</i><i class="k">シ</i><i class="k">ビ</i><i class="k">リ</i><i class="k">テ</i><i class="ks">ィ</i>: 問題<i class="k">あ</i><i class="k">り</i><i class="k">ま</i><i class="k">せ</i><i class="k">ん</i></span>
<div class="b" style="left:1522.5px;top:1053px;width:48.5px;height:27px;background:#DFDFDF"></div>
<svg class="b" style="left:1537px;top:1057px;" width="19" height="19" viewBox="0 0 19 19"><rect x="1.5" y="1.5" width="16" height="16" fill="none" stroke="#444" stroke-width="1.5"/><path d="M1.5 6.8H17.5M1.5 12.2H17.5M6.8 1.5V17.5M12.2 1.5V17.5" stroke="#444" stroke-width="1.3"/></svg>
<svg class="b" style="left:1587px;top:1057px;" width="20" height="19" viewBox="0 0 20 19"><rect x="1.5" y="1.5" width="17" height="16" fill="none" stroke="#444" stroke-width="1.5"/><rect x="5.5" y="5" width="9" height="9.5" fill="none" stroke="#444" stroke-width="1.2"/><path d="M7.5 8H12.5M7.5 11H12.5" stroke="#444" stroke-width="1.1"/></svg>
<svg class="b" style="left:1637px;top:1057px;" width="20" height="19" viewBox="0 0 20 19"><rect x="1.5" y="1.5" width="17" height="16" fill="none" stroke="#444" stroke-width="1.5"/><path d="M7 1.5V10H13V1.5" fill="none" stroke="#444" stroke-width="1.3"/></svg>
<div class="b" style="left:1679px;top:1065.3px;width:10px;height:1.3px;background:#444"></div>
<div class="b" style="left:1695px;top:1065.5px;width:125px;height:1px;background:#7A7A7A"></div>
<div class="b" style="left:1755px;top:1058.5px;width:6px;height:15px;background:#555;border-radius:1px"></div>
<svg class="b" style="left:1825px;top:1060px;" width="12" height="12" viewBox="0 0 12 12"><path d="M6 1V11M1 6H11" stroke="#444" stroke-width="1.1"/></svg>
<span id="t81" class="t " style="left:1852.00px;top:1054.90px;font-size:16.3px;line-height:23px;color:#333;font-weight:350;font-family:'Liberation Sans','Noto Sans CJK JP',sans-serif;--ls:-0.133px;letter-spacing:-0.133px;">100%</span>
</div><div id="frame"></div></body></html>
